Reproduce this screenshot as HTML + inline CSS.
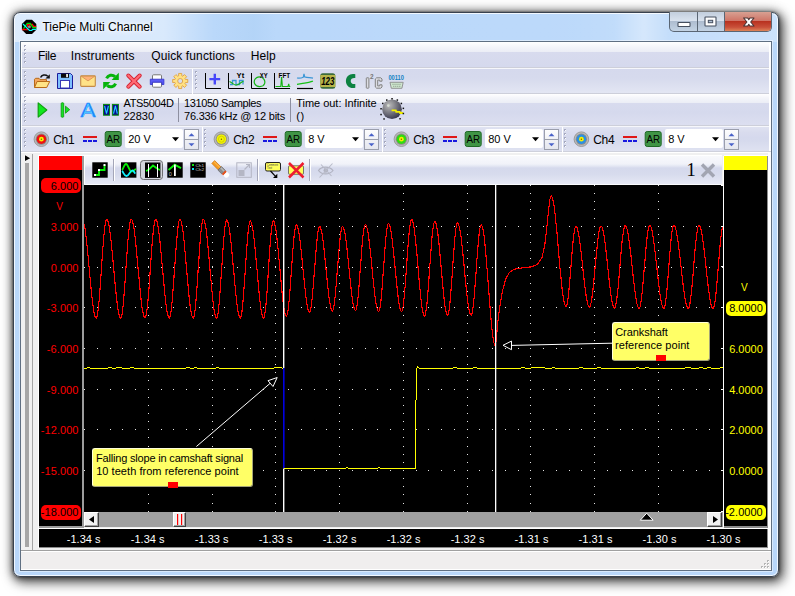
<!DOCTYPE html>
<html><head><meta charset="utf-8"><title>TiePie Multi Channel</title>
<style>
html,body{margin:0;padding:0;}
body{width:795px;height:596px;background:#fff;position:relative;overflow:hidden;font-family:"Liberation Sans",sans-serif;}
.a{position:absolute;}
.t{position:absolute;white-space:nowrap;line-height:1;opacity:.999;font-family:"Liberation Sans",sans-serif;}
#win{left:13px;top:12px;width:766px;height:565px;border-radius:7px;box-sizing:border-box;border:1px solid #39424f;
 background:linear-gradient(90deg,rgba(255,255,255,.5) 0,rgba(255,255,255,.45) 150px,rgba(255,255,255,0) 200px,rgba(160,200,240,.25) 240px,rgba(255,255,255,0) 262px,rgba(255,255,255,.04) 560px,rgba(255,255,255,.1) 600px,rgba(255,255,255,.4) 630px,rgba(255,255,255,.15) 655px,rgba(255,255,255,.25) 100%) 0 0/100% 29px no-repeat, linear-gradient(#bad8fa 0,#b9d7fa 100%);
 box-shadow:0 0 0 1px rgba(255,255,255,.8) inset, 0 0 2px rgba(0,0,0,.55), 0 1px 6px rgba(0,0,0,.5), 0 0 13px rgba(0,0,0,.3), 3px 4px 12px 2px rgba(0,0,0,.55);}
svg{position:absolute;left:0;top:0;overflow:visible}
</style></head><body>
<div class="a" id="win"></div><div class="a" style="left:669px;top:12px;width:103px;height:20px;border:1px solid #5a6674;border-top:none;border-radius:0 0 5px 5px;box-sizing:border-box;overflow:hidden;background:linear-gradient(#c2cedd 0,#d9e2ee 45%,#aebdd0 50%,#c3d3e4 100%)">
<div class="a" style="left:54px;top:0;width:48px;height:19px;background:linear-gradient(#d8a092 0,#cf7668 45%,#b93220 50%,#c9503a 80%,#dd8458 100%);border-left:1px solid #5a6674"></div>
<div class="a" style="left:27px;top:0;width:1px;height:19px;background:#5a6674"></div>
</div><svg width="795" height="596" viewBox="0 0 795 596">
<rect x="678" y="22.500" width="12" height="4" rx="0.500" fill="#fff" stroke="#454f5e" stroke-width="1.100"/>
<rect x="705" y="17" width="11" height="9" rx="0.500" fill="#fff" stroke="#454f5e" stroke-width="1.100"/>
<rect x="708.300" y="20.300" width="4.400" height="2.400" fill="#aebfd3" stroke="#454f5e" stroke-width="1"/>
<path d="M743.600 18h4.100l1.100 1.600 1.100-1.600h4.100l-3.300 4 3.300 4h-4.100l-1.100-1.600-1.100 1.600h-4.100l3.300-4z" fill="#fff" stroke="#4a3434" stroke-width="1.100" stroke-linejoin="round"/>
</svg><span class="t" style="left:42.40px;top:20.74px;font-size:12px;color:#000;letter-spacing:0.001px;text-shadow:0 0 6px #fff,0 0 10px #fff,0 0 3px #fff;">TiePie Multi Channel</span><svg width="795" height="596" viewBox="0 0 795 596">
<path d="M26.200 19.700h5.800l4.300 4.300v5.800l-4.300 4.300h-5.800l-4.300-4.300v-5.800z" fill="#000"/>
<path d="M22 29.500h6M27.500 27v-2.500h5l1 1.800h2.700" stroke="#f00" stroke-width="1.300" fill="none"/>
<path d="M23.500 28.600l3.700-5.200h3l2.800 4.200h3.200" stroke="#0d0" stroke-width="1.200" fill="none"/>
<path d="M23 24l6.500 6.500h2.200l1-1.200h3.500" stroke="#0ff" stroke-width="1.200" fill="none"/>
<circle cx="29.400" cy="26.700" r="1.500" fill="#8a8a8a"/>
</svg><div class="a" style="left:20px;top:41px;width:752px;height:530px;box-sizing:border-box;border:1px solid #5f6f82;background:#f0f0f0;box-shadow:0 0 0 1px rgba(255,255,255,.45)"></div><div class="a" style="left:21px;top:42px;width:750px;height:111px;background:#fff"></div><div class="a" style="left:22px;top:42px;width:747px;height:25px;background:linear-gradient(#ffffff 0,#f4f5fa 5px,#eceef6 9.5px,#d8dbee 10px,#d5d9ed 100%)"></div><div class="a" style="left:22px;top:68px;width:747px;height:25px;background:linear-gradient(#d5d9ed 0,#d6daed 40%,#e3e6f3 100%)"></div><div class="a" style="left:22px;top:94px;width:747px;height:31px;background:linear-gradient(#ffffff 0,#f4f5fa 4px,#eceef6 8.5px,#d8dbee 9px,#d5d9ed 60%,#dcdff0 100%)"></div><div class="a" style="left:22px;top:126px;width:747px;height:25px;background:linear-gradient(#e1e4f2 0,#d9dcee 6px,#d5d9ed 12px,#d6daed 60%,#dfe2f1 100%)"></div><div class="a" style="left:21px;top:151px;width:750px;height:1px;background:#cfd1dc"></div><div class="a" style="left:22px;top:67px;width:747px;height:1px;background:#cdcfda"></div><div class="a" style="left:22px;top:93px;width:747px;height:1px;background:#cdcfda"></div><div class="a" style="left:22px;top:125px;width:747px;height:1px;background:#cdcfda"></div><div class="a" style="left:22px;top:68px;width:747px;height:1px;background:#f6f7fb"></div><div class="a" style="left:22px;top:126px;width:747px;height:1px;background:#f6f7fb"></div><svg width="795" height="596" viewBox="0 0 795 596"><rect x="24" y="45" width="2" height="2" fill="#fff"/><rect x="24" y="45" width="2" height="1" fill="#a5a9bf"/><rect x="24" y="46" width="1" height="1" fill="#a5a9bf"/><rect x="24" y="49" width="2" height="2" fill="#fff"/><rect x="24" y="49" width="2" height="1" fill="#a5a9bf"/><rect x="24" y="50" width="1" height="1" fill="#a5a9bf"/><rect x="24" y="53" width="2" height="2" fill="#fff"/><rect x="24" y="53" width="2" height="1" fill="#a5a9bf"/><rect x="24" y="54" width="1" height="1" fill="#a5a9bf"/><rect x="24" y="57" width="2" height="2" fill="#fff"/><rect x="24" y="57" width="2" height="1" fill="#a5a9bf"/><rect x="24" y="58" width="1" height="1" fill="#a5a9bf"/><rect x="24" y="61" width="2" height="2" fill="#fff"/><rect x="24" y="61" width="2" height="1" fill="#a5a9bf"/><rect x="24" y="62" width="1" height="1" fill="#a5a9bf"/><rect x="24" y="71" width="2" height="2" fill="#fff"/><rect x="24" y="71" width="2" height="1" fill="#a5a9bf"/><rect x="24" y="72" width="1" height="1" fill="#a5a9bf"/><rect x="24" y="75" width="2" height="2" fill="#fff"/><rect x="24" y="75" width="2" height="1" fill="#a5a9bf"/><rect x="24" y="76" width="1" height="1" fill="#a5a9bf"/><rect x="24" y="79" width="2" height="2" fill="#fff"/><rect x="24" y="79" width="2" height="1" fill="#a5a9bf"/><rect x="24" y="80" width="1" height="1" fill="#a5a9bf"/><rect x="24" y="83" width="2" height="2" fill="#fff"/><rect x="24" y="83" width="2" height="1" fill="#a5a9bf"/><rect x="24" y="84" width="1" height="1" fill="#a5a9bf"/><rect x="24" y="87" width="2" height="2" fill="#fff"/><rect x="24" y="87" width="2" height="1" fill="#a5a9bf"/><rect x="24" y="88" width="1" height="1" fill="#a5a9bf"/><rect x="24" y="96" width="2" height="2" fill="#fff"/><rect x="24" y="96" width="2" height="1" fill="#a5a9bf"/><rect x="24" y="97" width="1" height="1" fill="#a5a9bf"/><rect x="24" y="100" width="2" height="2" fill="#fff"/><rect x="24" y="100" width="2" height="1" fill="#a5a9bf"/><rect x="24" y="101" width="1" height="1" fill="#a5a9bf"/><rect x="24" y="104" width="2" height="2" fill="#fff"/><rect x="24" y="104" width="2" height="1" fill="#a5a9bf"/><rect x="24" y="105" width="1" height="1" fill="#a5a9bf"/><rect x="24" y="108" width="2" height="2" fill="#fff"/><rect x="24" y="108" width="2" height="1" fill="#a5a9bf"/><rect x="24" y="109" width="1" height="1" fill="#a5a9bf"/><rect x="24" y="112" width="2" height="2" fill="#fff"/><rect x="24" y="112" width="2" height="1" fill="#a5a9bf"/><rect x="24" y="113" width="1" height="1" fill="#a5a9bf"/><rect x="24" y="116" width="2" height="2" fill="#fff"/><rect x="24" y="116" width="2" height="1" fill="#a5a9bf"/><rect x="24" y="117" width="1" height="1" fill="#a5a9bf"/><rect x="24" y="120" width="2" height="2" fill="#fff"/><rect x="24" y="120" width="2" height="1" fill="#a5a9bf"/><rect x="24" y="121" width="1" height="1" fill="#a5a9bf"/><rect x="24" y="129" width="2" height="2" fill="#fff"/><rect x="24" y="129" width="2" height="1" fill="#a5a9bf"/><rect x="24" y="130" width="1" height="1" fill="#a5a9bf"/><rect x="24" y="133" width="2" height="2" fill="#fff"/><rect x="24" y="133" width="2" height="1" fill="#a5a9bf"/><rect x="24" y="134" width="1" height="1" fill="#a5a9bf"/><rect x="24" y="137" width="2" height="2" fill="#fff"/><rect x="24" y="137" width="2" height="1" fill="#a5a9bf"/><rect x="24" y="138" width="1" height="1" fill="#a5a9bf"/><rect x="24" y="141" width="2" height="2" fill="#fff"/><rect x="24" y="141" width="2" height="1" fill="#a5a9bf"/><rect x="24" y="142" width="1" height="1" fill="#a5a9bf"/><rect x="24" y="145" width="2" height="2" fill="#fff"/><rect x="24" y="145" width="2" height="1" fill="#a5a9bf"/><rect x="24" y="146" width="1" height="1" fill="#a5a9bf"/><rect x="195" y="71" width="2" height="2" fill="#fff"/><rect x="195" y="71" width="2" height="1" fill="#a5a9bf"/><rect x="195" y="72" width="1" height="1" fill="#a5a9bf"/><rect x="195" y="75" width="2" height="2" fill="#fff"/><rect x="195" y="75" width="2" height="1" fill="#a5a9bf"/><rect x="195" y="76" width="1" height="1" fill="#a5a9bf"/><rect x="195" y="79" width="2" height="2" fill="#fff"/><rect x="195" y="79" width="2" height="1" fill="#a5a9bf"/><rect x="195" y="80" width="1" height="1" fill="#a5a9bf"/><rect x="195" y="83" width="2" height="2" fill="#fff"/><rect x="195" y="83" width="2" height="1" fill="#a5a9bf"/><rect x="195" y="84" width="1" height="1" fill="#a5a9bf"/><rect x="195" y="87" width="2" height="2" fill="#fff"/><rect x="195" y="87" width="2" height="1" fill="#a5a9bf"/><rect x="195" y="88" width="1" height="1" fill="#a5a9bf"/><rect x="204" y="129" width="2" height="2" fill="#fff"/><rect x="204" y="129" width="2" height="1" fill="#a5a9bf"/><rect x="204" y="130" width="1" height="1" fill="#a5a9bf"/><rect x="204" y="133" width="2" height="2" fill="#fff"/><rect x="204" y="133" width="2" height="1" fill="#a5a9bf"/><rect x="204" y="134" width="1" height="1" fill="#a5a9bf"/><rect x="204" y="137" width="2" height="2" fill="#fff"/><rect x="204" y="137" width="2" height="1" fill="#a5a9bf"/><rect x="204" y="138" width="1" height="1" fill="#a5a9bf"/><rect x="204" y="141" width="2" height="2" fill="#fff"/><rect x="204" y="141" width="2" height="1" fill="#a5a9bf"/><rect x="204" y="142" width="1" height="1" fill="#a5a9bf"/><rect x="204" y="145" width="2" height="2" fill="#fff"/><rect x="204" y="145" width="2" height="1" fill="#a5a9bf"/><rect x="204" y="146" width="1" height="1" fill="#a5a9bf"/><rect x="384" y="129" width="2" height="2" fill="#fff"/><rect x="384" y="129" width="2" height="1" fill="#a5a9bf"/><rect x="384" y="130" width="1" height="1" fill="#a5a9bf"/><rect x="384" y="133" width="2" height="2" fill="#fff"/><rect x="384" y="133" width="2" height="1" fill="#a5a9bf"/><rect x="384" y="134" width="1" height="1" fill="#a5a9bf"/><rect x="384" y="137" width="2" height="2" fill="#fff"/><rect x="384" y="137" width="2" height="1" fill="#a5a9bf"/><rect x="384" y="138" width="1" height="1" fill="#a5a9bf"/><rect x="384" y="141" width="2" height="2" fill="#fff"/><rect x="384" y="141" width="2" height="1" fill="#a5a9bf"/><rect x="384" y="142" width="1" height="1" fill="#a5a9bf"/><rect x="384" y="145" width="2" height="2" fill="#fff"/><rect x="384" y="145" width="2" height="1" fill="#a5a9bf"/><rect x="384" y="146" width="1" height="1" fill="#a5a9bf"/><rect x="564" y="129" width="2" height="2" fill="#fff"/><rect x="564" y="129" width="2" height="1" fill="#a5a9bf"/><rect x="564" y="130" width="1" height="1" fill="#a5a9bf"/><rect x="564" y="133" width="2" height="2" fill="#fff"/><rect x="564" y="133" width="2" height="1" fill="#a5a9bf"/><rect x="564" y="134" width="1" height="1" fill="#a5a9bf"/><rect x="564" y="137" width="2" height="2" fill="#fff"/><rect x="564" y="137" width="2" height="1" fill="#a5a9bf"/><rect x="564" y="138" width="1" height="1" fill="#a5a9bf"/><rect x="564" y="141" width="2" height="2" fill="#fff"/><rect x="564" y="141" width="2" height="1" fill="#a5a9bf"/><rect x="564" y="142" width="1" height="1" fill="#a5a9bf"/><rect x="564" y="145" width="2" height="2" fill="#fff"/><rect x="564" y="145" width="2" height="1" fill="#a5a9bf"/><rect x="564" y="146" width="1" height="1" fill="#a5a9bf"/></svg><div class="a" style="left:192px;top:69px;width:1px;height:25px;background:#fff"></div><div class="a" style="left:202px;top:127px;width:1px;height:25px;background:#fff"></div><div class="a" style="left:382px;top:127px;width:1px;height:25px;background:#fff"></div><div class="a" style="left:562px;top:127px;width:1px;height:25px;background:#fff"></div><span class="t" style="left:38.00px;top:49.54px;font-size:12px;color:#000;letter-spacing:-0.334px;">File</span><span class="t" style="left:70.80px;top:49.54px;font-size:12px;color:#000;letter-spacing:0.101px;">Instruments</span><span class="t" style="left:151.20px;top:49.54px;font-size:12px;color:#000;letter-spacing:0.111px;">Quick functions</span><span class="t" style="left:250.80px;top:49.54px;font-size:12px;color:#000;letter-spacing:0.030px;">Help</span><span class="t" style="left:123.50px;top:97.69px;font-size:11px;color:#000;letter-spacing:-0.374px;">ATS5004D</span><span class="t" style="left:123.50px;top:110.69px;font-size:11px;color:#000;">22830</span><div class="a" style="left:178px;top:98px;width:1px;height:24px;background:#8d8fa0"></div><span class="t" style="left:184.00px;top:97.69px;font-size:11px;color:#000;letter-spacing:-0.397px;">131050 Samples</span><span class="t" style="left:184.00px;top:110.69px;font-size:11px;color:#000;letter-spacing:-0.217px;">76.336 kHz @ 12 bits</span><div class="a" style="left:290px;top:98px;width:1px;height:24px;background:#8d8fa0"></div><span class="t" style="left:296.20px;top:97.69px;font-size:11px;color:#000;letter-spacing:-0.022px;">Time out: Infinite</span><span class="t" style="left:296.20px;top:110.69px;font-size:11px;color:#000;letter-spacing:0.6px;">()</span><span class="t" style="left:53.30px;top:133.74px;font-size:12px;color:#000;letter-spacing:-0.338px;">Ch1</span><div class="a" style="left:125px;top:129px;width:58px;height:19px;background:#fff;border-radius:2px"></div><span class="t" style="left:128.20px;top:134.09px;font-size:11px;color:#000;">20 V</span><div class="a" style="left:184px;top:129px;width:15px;height:21px;box-sizing:border-box;border:1px solid #9a9eac;background:linear-gradient(#fdfdfe,#e4e6ee)"></div><div class="a" style="left:185px;top:139px;width:13px;height:1px;background:#9a9eac"></div><span class="t" style="left:233.30px;top:133.74px;font-size:12px;color:#000;letter-spacing:-0.338px;">Ch2</span><div class="a" style="left:305px;top:129px;width:58px;height:19px;background:#fff;border-radius:2px"></div><span class="t" style="left:308.20px;top:134.09px;font-size:11px;color:#000;">8 V</span><div class="a" style="left:364px;top:129px;width:15px;height:21px;box-sizing:border-box;border:1px solid #9a9eac;background:linear-gradient(#fdfdfe,#e4e6ee)"></div><div class="a" style="left:365px;top:139px;width:13px;height:1px;background:#9a9eac"></div><span class="t" style="left:413.30px;top:133.74px;font-size:12px;color:#000;letter-spacing:-0.338px;">Ch3</span><div class="a" style="left:485px;top:129px;width:58px;height:19px;background:#fff;border-radius:2px"></div><span class="t" style="left:488.20px;top:134.09px;font-size:11px;color:#000;">80 V</span><div class="a" style="left:544px;top:129px;width:15px;height:21px;box-sizing:border-box;border:1px solid #9a9eac;background:linear-gradient(#fdfdfe,#e4e6ee)"></div><div class="a" style="left:545px;top:139px;width:13px;height:1px;background:#9a9eac"></div><span class="t" style="left:593.30px;top:133.74px;font-size:12px;color:#000;letter-spacing:-0.338px;">Ch4</span><div class="a" style="left:665px;top:129px;width:58px;height:19px;background:#fff;border-radius:2px"></div><span class="t" style="left:668.20px;top:134.09px;font-size:11px;color:#000;">8 V</span><div class="a" style="left:724px;top:129px;width:15px;height:21px;box-sizing:border-box;border:1px solid #9a9eac;background:linear-gradient(#fdfdfe,#e4e6ee)"></div><div class="a" style="left:725px;top:139px;width:13px;height:1px;background:#9a9eac"></div><div class="a" style="left:768px;top:153px;width:3px;height:397px;background:#fff"></div><div class="a" style="left:32px;top:154px;width:1px;height:396px;background:#a4a4a4"></div><div class="a" style="left:25px;top:163px;width:4px;height:384px;background:#a6a6a6"></div><svg width="795" height="596" viewBox="0 0 795 596"><path d="M25 155.300l5.200 2.900-5.200 2.900z" fill="#000" stroke="#fff" stroke-width="0.800" paint-order="stroke"/></svg><div class="a" style="left:38px;top:155px;width:46px;height:373px;background:#9c9c9c;border-left:1px solid #fff;border-top:1px solid #fff;box-sizing:border-box"></div><div class="a" style="left:39px;top:156px;width:43px;height:370px;background:#000"></div><div class="a" style="left:39px;top:156px;width:43px;height:14px;background:#f00"></div><div class="a" style="left:724px;top:155px;width:44px;height:373px;background:#8c8c8c;border-top:1px solid #fff;box-sizing:border-box"></div><div class="a" style="left:724px;top:156px;width:43px;height:370px;background:#000"></div><div class="a" style="left:724px;top:156px;width:43px;height:14px;background:#ff0"></div><div class="a" style="left:38px;top:528px;width:730px;height:20px;background:#8c8c8c;border-left:1px solid #fff;border-top:1px solid #fff;box-sizing:border-box"></div><div class="a" style="left:39px;top:529px;width:728px;height:18px;background:#000"></div><div class="a" style="left:84px;top:155px;width:638px;height:30px;box-sizing:border-box;border-top:1px solid #fff;border-left:1px solid #fff;border-bottom:1px solid #fafbfd;background:linear-gradient(#f8f9fc 0,#f1f2f9 8px,#e4e7f3 10px,#d5d9ec 12px,#d7dbed 18px,#e6e8f4 100%)"></div><div class="a" style="left:84px;top:185px;width:639px;height:327px;background:#000"></div><div class="a" style="left:723px;top:156px;width:1px;height:371px;background:#fff"></div><div class="a" style="left:84px;top:512px;width:639px;height:15px;background:#a0a0a0"></div><div class="a" style="left:84px;top:512px;width:15px;height:15px;box-sizing:border-box;background:#f0f0f0;border:1px solid #fff;border-right-color:#404040;border-bottom-color:#404040;box-shadow:-1px -1px 0 #a0a0a0 inset"></div><div class="a" style="left:707px;top:512px;width:15px;height:15px;box-sizing:border-box;background:#f0f0f0;border:1px solid #fff;border-right-color:#404040;border-bottom-color:#404040;box-shadow:-1px -1px 0 #a0a0a0 inset"></div><div class="a" style="left:173px;top:512px;width:13px;height:15px;box-sizing:border-box;background:#f0f0f0;border:1px solid #fff;border-right-color:#404040;border-bottom-color:#404040;box-shadow:-1px -1px 0 #a0a0a0 inset"></div><svg width="795" height="596" viewBox="0 0 795 596">
<path d="M94 516v7l-5-3.5z" fill="#000"/><path d="M713 516v7l5-3.5z" fill="#000"/>
<rect x="177" y="514" width="1.2" height="11" fill="#f00"/><rect x="181" y="514" width="1.2" height="11" fill="#f00"/>
<path d="M646.7 513.2l6.4 7h-12.8z" fill="#000" stroke="#fff" stroke-width="1"/>
</svg><svg width="795" height="596" viewBox="0 0 795 596" shape-rendering="auto"><path d="M84 226h1v1h-1zM84 267h1v1h-1zM84 307h1v1h-1zM84 348h1v1h-1zM84 389h1v1h-1zM84 429h1v1h-1zM84 470h1v1h-1zM97 226h1v1h-1zM97 267h1v1h-1zM97 307h1v1h-1zM97 348h1v1h-1zM97 389h1v1h-1zM97 429h1v1h-1zM97 470h1v1h-1zM110 226h1v1h-1zM110 267h1v1h-1zM110 307h1v1h-1zM110 348h1v1h-1zM110 389h1v1h-1zM110 429h1v1h-1zM110 470h1v1h-1zM122 226h1v1h-1zM122 267h1v1h-1zM122 307h1v1h-1zM122 348h1v1h-1zM122 389h1v1h-1zM122 429h1v1h-1zM122 470h1v1h-1zM135 226h1v1h-1zM135 267h1v1h-1zM135 307h1v1h-1zM135 348h1v1h-1zM135 389h1v1h-1zM135 429h1v1h-1zM135 470h1v1h-1zM148 185h1v1h-1zM148 193h1v1h-1zM148 201h1v1h-1zM148 209h1v1h-1zM148 218h1v1h-1zM148 226h1v1h-1zM148 234h1v1h-1zM148 242h1v1h-1zM148 250h1v1h-1zM148 258h1v1h-1zM148 266h1v1h-1zM148 267h1v1h-1zM148 275h1v1h-1zM148 283h1v1h-1zM148 291h1v1h-1zM148 299h1v1h-1zM148 307h1v1h-1zM148 315h1v1h-1zM148 323h1v1h-1zM148 332h1v1h-1zM148 340h1v1h-1zM148 348h1v1h-1zM148 356h1v1h-1zM148 364h1v1h-1zM148 372h1v1h-1zM148 380h1v1h-1zM148 389h1v1h-1zM148 397h1v1h-1zM148 405h1v1h-1zM148 413h1v1h-1zM148 421h1v1h-1zM148 429h1v1h-1zM148 437h1v1h-1zM148 446h1v1h-1zM148 454h1v1h-1zM148 462h1v1h-1zM148 470h1v1h-1zM148 478h1v1h-1zM148 486h1v1h-1zM148 494h1v1h-1zM148 503h1v1h-1zM148 511h1v1h-1zM161 226h1v1h-1zM161 267h1v1h-1zM161 307h1v1h-1zM161 348h1v1h-1zM161 389h1v1h-1zM161 429h1v1h-1zM161 470h1v1h-1zM173 226h1v1h-1zM173 267h1v1h-1zM173 307h1v1h-1zM173 348h1v1h-1zM173 389h1v1h-1zM173 429h1v1h-1zM173 470h1v1h-1zM186 226h1v1h-1zM186 267h1v1h-1zM186 307h1v1h-1zM186 348h1v1h-1zM186 389h1v1h-1zM186 429h1v1h-1zM186 470h1v1h-1zM199 226h1v1h-1zM199 267h1v1h-1zM199 307h1v1h-1zM199 348h1v1h-1zM199 389h1v1h-1zM199 429h1v1h-1zM199 470h1v1h-1zM212 185h1v1h-1zM212 193h1v1h-1zM212 201h1v1h-1zM212 209h1v1h-1zM212 218h1v1h-1zM212 226h1v1h-1zM212 234h1v1h-1zM212 242h1v1h-1zM212 250h1v1h-1zM212 258h1v1h-1zM212 266h1v1h-1zM212 267h1v1h-1zM212 275h1v1h-1zM212 283h1v1h-1zM212 291h1v1h-1zM212 299h1v1h-1zM212 307h1v1h-1zM212 315h1v1h-1zM212 323h1v1h-1zM212 332h1v1h-1zM212 340h1v1h-1zM212 348h1v1h-1zM212 356h1v1h-1zM212 364h1v1h-1zM212 372h1v1h-1zM212 380h1v1h-1zM212 389h1v1h-1zM212 397h1v1h-1zM212 405h1v1h-1zM212 413h1v1h-1zM212 421h1v1h-1zM212 429h1v1h-1zM212 437h1v1h-1zM212 446h1v1h-1zM212 454h1v1h-1zM212 462h1v1h-1zM212 470h1v1h-1zM212 478h1v1h-1zM212 486h1v1h-1zM212 494h1v1h-1zM212 503h1v1h-1zM212 511h1v1h-1zM224 226h1v1h-1zM224 267h1v1h-1zM224 307h1v1h-1zM224 348h1v1h-1zM224 389h1v1h-1zM224 429h1v1h-1zM224 470h1v1h-1zM237 226h1v1h-1zM237 267h1v1h-1zM237 307h1v1h-1zM237 348h1v1h-1zM237 389h1v1h-1zM237 429h1v1h-1zM237 470h1v1h-1zM250 226h1v1h-1zM250 267h1v1h-1zM250 307h1v1h-1zM250 348h1v1h-1zM250 389h1v1h-1zM250 429h1v1h-1zM250 470h1v1h-1zM263 226h1v1h-1zM263 267h1v1h-1zM263 307h1v1h-1zM263 348h1v1h-1zM263 389h1v1h-1zM263 429h1v1h-1zM263 470h1v1h-1zM275 185h1v1h-1zM275 193h1v1h-1zM275 201h1v1h-1zM275 209h1v1h-1zM275 218h1v1h-1zM275 226h1v1h-1zM275 234h1v1h-1zM275 242h1v1h-1zM275 250h1v1h-1zM275 258h1v1h-1zM275 266h1v1h-1zM275 267h1v1h-1zM275 275h1v1h-1zM275 283h1v1h-1zM275 291h1v1h-1zM275 299h1v1h-1zM275 307h1v1h-1zM275 315h1v1h-1zM275 323h1v1h-1zM275 332h1v1h-1zM275 340h1v1h-1zM275 348h1v1h-1zM275 356h1v1h-1zM275 364h1v1h-1zM275 372h1v1h-1zM275 380h1v1h-1zM275 389h1v1h-1zM275 397h1v1h-1zM275 405h1v1h-1zM275 413h1v1h-1zM275 421h1v1h-1zM275 429h1v1h-1zM275 437h1v1h-1zM275 446h1v1h-1zM275 454h1v1h-1zM275 462h1v1h-1zM275 470h1v1h-1zM275 478h1v1h-1zM275 486h1v1h-1zM275 494h1v1h-1zM275 503h1v1h-1zM275 511h1v1h-1zM288 226h1v1h-1zM288 267h1v1h-1zM288 307h1v1h-1zM288 348h1v1h-1zM288 389h1v1h-1zM288 429h1v1h-1zM288 470h1v1h-1zM301 226h1v1h-1zM301 267h1v1h-1zM301 307h1v1h-1zM301 348h1v1h-1zM301 389h1v1h-1zM301 429h1v1h-1zM301 470h1v1h-1zM314 226h1v1h-1zM314 267h1v1h-1zM314 307h1v1h-1zM314 348h1v1h-1zM314 389h1v1h-1zM314 429h1v1h-1zM314 470h1v1h-1zM326 226h1v1h-1zM326 267h1v1h-1zM326 307h1v1h-1zM326 348h1v1h-1zM326 389h1v1h-1zM326 429h1v1h-1zM326 470h1v1h-1zM339 185h1v1h-1zM339 193h1v1h-1zM339 201h1v1h-1zM339 209h1v1h-1zM339 218h1v1h-1zM339 226h1v1h-1zM339 234h1v1h-1zM339 242h1v1h-1zM339 250h1v1h-1zM339 258h1v1h-1zM339 266h1v1h-1zM339 267h1v1h-1zM339 275h1v1h-1zM339 283h1v1h-1zM339 291h1v1h-1zM339 299h1v1h-1zM339 307h1v1h-1zM339 315h1v1h-1zM339 323h1v1h-1zM339 332h1v1h-1zM339 340h1v1h-1zM339 348h1v1h-1zM339 356h1v1h-1zM339 364h1v1h-1zM339 372h1v1h-1zM339 380h1v1h-1zM339 389h1v1h-1zM339 397h1v1h-1zM339 405h1v1h-1zM339 413h1v1h-1zM339 421h1v1h-1zM339 429h1v1h-1zM339 437h1v1h-1zM339 446h1v1h-1zM339 454h1v1h-1zM339 462h1v1h-1zM339 470h1v1h-1zM339 478h1v1h-1zM339 486h1v1h-1zM339 494h1v1h-1zM339 503h1v1h-1zM339 511h1v1h-1zM352 226h1v1h-1zM352 267h1v1h-1zM352 307h1v1h-1zM352 348h1v1h-1zM352 389h1v1h-1zM352 429h1v1h-1zM352 470h1v1h-1zM365 226h1v1h-1zM365 267h1v1h-1zM365 307h1v1h-1zM365 348h1v1h-1zM365 389h1v1h-1zM365 429h1v1h-1zM365 470h1v1h-1zM377 226h1v1h-1zM377 267h1v1h-1zM377 307h1v1h-1zM377 348h1v1h-1zM377 389h1v1h-1zM377 429h1v1h-1zM377 470h1v1h-1zM390 226h1v1h-1zM390 267h1v1h-1zM390 307h1v1h-1zM390 348h1v1h-1zM390 389h1v1h-1zM390 429h1v1h-1zM390 470h1v1h-1zM403 185h1v1h-1zM403 193h1v1h-1zM403 201h1v1h-1zM403 209h1v1h-1zM403 218h1v1h-1zM403 226h1v1h-1zM403 234h1v1h-1zM403 242h1v1h-1zM403 250h1v1h-1zM403 258h1v1h-1zM403 266h1v1h-1zM403 267h1v1h-1zM403 275h1v1h-1zM403 283h1v1h-1zM403 291h1v1h-1zM403 299h1v1h-1zM403 307h1v1h-1zM403 315h1v1h-1zM403 323h1v1h-1zM403 332h1v1h-1zM403 340h1v1h-1zM403 348h1v1h-1zM403 356h1v1h-1zM403 364h1v1h-1zM403 372h1v1h-1zM403 380h1v1h-1zM403 389h1v1h-1zM403 397h1v1h-1zM403 405h1v1h-1zM403 413h1v1h-1zM403 421h1v1h-1zM403 429h1v1h-1zM403 437h1v1h-1zM403 446h1v1h-1zM403 454h1v1h-1zM403 462h1v1h-1zM403 470h1v1h-1zM403 478h1v1h-1zM403 486h1v1h-1zM403 494h1v1h-1zM403 503h1v1h-1zM403 511h1v1h-1zM416 226h1v1h-1zM416 267h1v1h-1zM416 307h1v1h-1zM416 348h1v1h-1zM416 389h1v1h-1zM416 429h1v1h-1zM416 470h1v1h-1zM428 226h1v1h-1zM428 267h1v1h-1zM428 307h1v1h-1zM428 348h1v1h-1zM428 389h1v1h-1zM428 429h1v1h-1zM428 470h1v1h-1zM441 226h1v1h-1zM441 267h1v1h-1zM441 307h1v1h-1zM441 348h1v1h-1zM441 389h1v1h-1zM441 429h1v1h-1zM441 470h1v1h-1zM454 226h1v1h-1zM454 267h1v1h-1zM454 307h1v1h-1zM454 348h1v1h-1zM454 389h1v1h-1zM454 429h1v1h-1zM454 470h1v1h-1zM467 185h1v1h-1zM467 193h1v1h-1zM467 201h1v1h-1zM467 209h1v1h-1zM467 218h1v1h-1zM467 226h1v1h-1zM467 234h1v1h-1zM467 242h1v1h-1zM467 250h1v1h-1zM467 258h1v1h-1zM467 266h1v1h-1zM467 267h1v1h-1zM467 275h1v1h-1zM467 283h1v1h-1zM467 291h1v1h-1zM467 299h1v1h-1zM467 307h1v1h-1zM467 315h1v1h-1zM467 323h1v1h-1zM467 332h1v1h-1zM467 340h1v1h-1zM467 348h1v1h-1zM467 356h1v1h-1zM467 364h1v1h-1zM467 372h1v1h-1zM467 380h1v1h-1zM467 389h1v1h-1zM467 397h1v1h-1zM467 405h1v1h-1zM467 413h1v1h-1zM467 421h1v1h-1zM467 429h1v1h-1zM467 437h1v1h-1zM467 446h1v1h-1zM467 454h1v1h-1zM467 462h1v1h-1zM467 470h1v1h-1zM467 478h1v1h-1zM467 486h1v1h-1zM467 494h1v1h-1zM467 503h1v1h-1zM467 511h1v1h-1zM479 226h1v1h-1zM479 267h1v1h-1zM479 307h1v1h-1zM479 348h1v1h-1zM479 389h1v1h-1zM479 429h1v1h-1zM479 470h1v1h-1zM492 226h1v1h-1zM492 267h1v1h-1zM492 307h1v1h-1zM492 348h1v1h-1zM492 389h1v1h-1zM492 429h1v1h-1zM492 470h1v1h-1zM505 226h1v1h-1zM505 267h1v1h-1zM505 307h1v1h-1zM505 348h1v1h-1zM505 389h1v1h-1zM505 429h1v1h-1zM505 470h1v1h-1zM518 226h1v1h-1zM518 267h1v1h-1zM518 307h1v1h-1zM518 348h1v1h-1zM518 389h1v1h-1zM518 429h1v1h-1zM518 470h1v1h-1zM530 185h1v1h-1zM530 193h1v1h-1zM530 201h1v1h-1zM530 209h1v1h-1zM530 218h1v1h-1zM530 226h1v1h-1zM530 234h1v1h-1zM530 242h1v1h-1zM530 250h1v1h-1zM530 258h1v1h-1zM530 266h1v1h-1zM530 267h1v1h-1zM530 275h1v1h-1zM530 283h1v1h-1zM530 291h1v1h-1zM530 299h1v1h-1zM530 307h1v1h-1zM530 315h1v1h-1zM530 323h1v1h-1zM530 332h1v1h-1zM530 340h1v1h-1zM530 348h1v1h-1zM530 356h1v1h-1zM530 364h1v1h-1zM530 372h1v1h-1zM530 380h1v1h-1zM530 389h1v1h-1zM530 397h1v1h-1zM530 405h1v1h-1zM530 413h1v1h-1zM530 421h1v1h-1zM530 429h1v1h-1zM530 437h1v1h-1zM530 446h1v1h-1zM530 454h1v1h-1zM530 462h1v1h-1zM530 470h1v1h-1zM530 478h1v1h-1zM530 486h1v1h-1zM530 494h1v1h-1zM530 503h1v1h-1zM530 511h1v1h-1zM543 226h1v1h-1zM543 267h1v1h-1zM543 307h1v1h-1zM543 348h1v1h-1zM543 389h1v1h-1zM543 429h1v1h-1zM543 470h1v1h-1zM556 226h1v1h-1zM556 267h1v1h-1zM556 307h1v1h-1zM556 348h1v1h-1zM556 389h1v1h-1zM556 429h1v1h-1zM556 470h1v1h-1zM569 226h1v1h-1zM569 267h1v1h-1zM569 307h1v1h-1zM569 348h1v1h-1zM569 389h1v1h-1zM569 429h1v1h-1zM569 470h1v1h-1zM581 226h1v1h-1zM581 267h1v1h-1zM581 307h1v1h-1zM581 348h1v1h-1zM581 389h1v1h-1zM581 429h1v1h-1zM581 470h1v1h-1zM594 185h1v1h-1zM594 193h1v1h-1zM594 201h1v1h-1zM594 209h1v1h-1zM594 218h1v1h-1zM594 226h1v1h-1zM594 234h1v1h-1zM594 242h1v1h-1zM594 250h1v1h-1zM594 258h1v1h-1zM594 266h1v1h-1zM594 267h1v1h-1zM594 275h1v1h-1zM594 283h1v1h-1zM594 291h1v1h-1zM594 299h1v1h-1zM594 307h1v1h-1zM594 315h1v1h-1zM594 323h1v1h-1zM594 332h1v1h-1zM594 340h1v1h-1zM594 348h1v1h-1zM594 356h1v1h-1zM594 364h1v1h-1zM594 372h1v1h-1zM594 380h1v1h-1zM594 389h1v1h-1zM594 397h1v1h-1zM594 405h1v1h-1zM594 413h1v1h-1zM594 421h1v1h-1zM594 429h1v1h-1zM594 437h1v1h-1zM594 446h1v1h-1zM594 454h1v1h-1zM594 462h1v1h-1zM594 470h1v1h-1zM594 478h1v1h-1zM594 486h1v1h-1zM594 494h1v1h-1zM594 503h1v1h-1zM594 511h1v1h-1zM607 226h1v1h-1zM607 267h1v1h-1zM607 307h1v1h-1zM607 348h1v1h-1zM607 389h1v1h-1zM607 429h1v1h-1zM607 470h1v1h-1zM620 226h1v1h-1zM620 267h1v1h-1zM620 307h1v1h-1zM620 348h1v1h-1zM620 389h1v1h-1zM620 429h1v1h-1zM620 470h1v1h-1zM632 226h1v1h-1zM632 267h1v1h-1zM632 307h1v1h-1zM632 348h1v1h-1zM632 389h1v1h-1zM632 429h1v1h-1zM632 470h1v1h-1zM645 226h1v1h-1zM645 267h1v1h-1zM645 307h1v1h-1zM645 348h1v1h-1zM645 389h1v1h-1zM645 429h1v1h-1zM645 470h1v1h-1zM658 185h1v1h-1zM658 193h1v1h-1zM658 201h1v1h-1zM658 209h1v1h-1zM658 218h1v1h-1zM658 226h1v1h-1zM658 234h1v1h-1zM658 242h1v1h-1zM658 250h1v1h-1zM658 258h1v1h-1zM658 266h1v1h-1zM658 267h1v1h-1zM658 275h1v1h-1zM658 283h1v1h-1zM658 291h1v1h-1zM658 299h1v1h-1zM658 307h1v1h-1zM658 315h1v1h-1zM658 323h1v1h-1zM658 332h1v1h-1zM658 340h1v1h-1zM658 348h1v1h-1zM658 356h1v1h-1zM658 364h1v1h-1zM658 372h1v1h-1zM658 380h1v1h-1zM658 389h1v1h-1zM658 397h1v1h-1zM658 405h1v1h-1zM658 413h1v1h-1zM658 421h1v1h-1zM658 429h1v1h-1zM658 437h1v1h-1zM658 446h1v1h-1zM658 454h1v1h-1zM658 462h1v1h-1zM658 470h1v1h-1zM658 478h1v1h-1zM658 486h1v1h-1zM658 494h1v1h-1zM658 503h1v1h-1zM658 511h1v1h-1zM671 226h1v1h-1zM671 267h1v1h-1zM671 307h1v1h-1zM671 348h1v1h-1zM671 389h1v1h-1zM671 429h1v1h-1zM671 470h1v1h-1zM683 226h1v1h-1zM683 267h1v1h-1zM683 307h1v1h-1zM683 348h1v1h-1zM683 389h1v1h-1zM683 429h1v1h-1zM683 470h1v1h-1zM696 226h1v1h-1zM696 267h1v1h-1zM696 307h1v1h-1zM696 348h1v1h-1zM696 389h1v1h-1zM696 429h1v1h-1zM696 470h1v1h-1zM709 226h1v1h-1zM709 267h1v1h-1zM709 307h1v1h-1zM709 348h1v1h-1zM709 389h1v1h-1zM709 429h1v1h-1zM709 470h1v1h-1zM722 226h1v1h-1zM722 267h1v1h-1zM722 307h1v1h-1zM722 348h1v1h-1zM722 389h1v1h-1zM722 429h1v1h-1zM722 470h1v1h-1z" fill="#e6e6e6"/><polyline points="84.2,224.2 84.7,226.9 85.2,230.1 85.7,233.8 86.2,237.9 86.7,242.4 87.2,247.2 87.7,252.4 88.2,257.7 88.7,263.1 89.2,268.6 89.7,274.2 90.2,279.6 90.7,284.9 91.2,290.1 91.7,294.9 92.2,299.4 92.7,303.5 93.2,307.2 93.7,310.4 94.2,313.1 94.7,315.2 95.2,316.8 95.7,317.7 96.2,318.0 96.7,317.4 97.2,315.8 97.7,313.1 98.2,309.4 98.7,304.8 99.2,299.4 99.7,293.3 100.2,286.7 100.7,279.6 101.2,272.3 101.7,265.0 102.2,257.7 102.7,250.6 103.2,244.0 103.7,237.9 104.2,232.5 104.7,227.9 105.2,224.2 105.7,221.5 106.2,219.9 106.7,219.3 107.2,219.6 107.7,220.5 108.2,222.1 108.7,224.2 109.2,226.9 109.7,230.1 110.2,233.8 110.7,237.9 111.2,242.4 111.7,247.2 112.2,252.4 112.7,257.7 113.2,263.1 113.7,268.6 114.2,274.2 114.7,279.6 115.2,284.9 115.7,290.1 116.2,294.9 116.7,299.4 117.2,303.5 117.7,307.2 118.2,310.4 118.7,313.1 119.2,315.2 119.7,316.8 120.2,317.7 120.7,318.0 121.2,317.4 121.8,315.6 122.3,312.6 122.8,308.6 123.3,303.5 123.8,297.7 124.4,291.1 124.9,283.9 125.4,276.4 125.9,268.7 126.5,260.9 127.0,253.4 127.5,246.2 128.0,239.6 128.6,233.8 129.1,228.7 129.6,224.7 130.1,221.7 130.7,219.9 131.2,219.3 131.7,219.6 132.2,220.6 132.7,222.3 133.2,224.5 133.8,227.4 134.3,230.8 134.8,234.8 135.3,239.2 135.8,244.0 136.3,249.1 136.8,254.5 137.3,260.1 137.8,265.8 138.4,271.5 138.9,277.2 139.4,282.8 139.9,288.2 140.4,293.3 140.9,298.1 141.4,302.5 141.9,306.5 142.4,309.9 143.0,312.8 143.5,315.0 144.0,316.7 144.5,317.7 145.0,318.0 145.5,317.4 146.0,315.8 146.5,313.1 147.0,309.4 147.5,304.8 148.1,299.4 148.6,293.3 149.1,286.7 149.6,279.6 150.1,272.3 150.6,265.0 151.1,257.7 151.6,250.6 152.1,244.0 152.6,237.9 153.2,232.5 153.7,227.9 154.2,224.2 154.7,221.5 155.2,219.9 155.7,219.3 156.2,219.6 156.7,220.6 157.2,222.3 157.7,224.5 158.2,227.4 158.7,230.8 159.2,234.8 159.7,239.2 160.2,244.0 160.7,249.1 161.2,254.5 161.7,260.1 162.2,265.8 162.8,271.5 163.3,277.2 163.8,282.8 164.3,288.2 164.8,293.3 165.3,298.1 165.8,302.5 166.3,306.5 166.8,309.9 167.3,312.8 167.8,315.0 168.3,316.7 168.8,317.7 169.3,318.0 169.8,317.4 170.3,315.8 170.8,313.1 171.3,309.4 171.8,304.8 172.3,299.4 172.8,293.3 173.3,286.7 173.8,279.6 174.3,272.3 174.9,265.0 175.4,257.7 175.9,250.6 176.4,244.0 176.9,237.9 177.4,232.5 177.9,227.9 178.4,224.2 178.9,221.5 179.4,219.9 179.9,219.3 180.4,219.7 180.9,220.7 181.4,222.5 181.9,225.0 182.5,228.0 183.0,231.7 183.5,235.9 184.0,240.6 184.5,245.7 185.0,251.2 185.5,256.8 186.0,262.7 186.6,268.6 187.1,274.6 187.6,280.5 188.1,286.1 188.6,291.6 189.1,296.7 189.6,301.4 190.1,305.6 190.6,309.3 191.2,312.3 191.7,314.8 192.2,316.6 192.7,317.6 193.2,318.0 193.7,317.4 194.2,315.6 194.7,312.6 195.2,308.6 195.7,303.5 196.2,297.7 196.7,291.1 197.2,283.9 197.7,276.4 198.2,268.7 198.8,260.9 199.3,253.4 199.8,246.2 200.3,239.6 200.8,233.8 201.3,228.7 201.8,224.7 202.3,221.7 202.8,219.9 203.3,219.3 203.8,219.7 204.3,220.7 204.8,222.5 205.3,225.0 205.9,228.0 206.4,231.7 206.9,235.9 207.4,240.6 207.9,245.7 208.4,251.2 208.9,256.8 209.4,262.7 209.9,268.6 210.5,274.6 211.0,280.5 211.5,286.1 212.0,291.6 212.5,296.7 213.0,301.4 213.5,305.6 214.0,309.3 214.6,312.3 215.1,314.8 215.6,316.6 216.1,317.6 216.6,318.0 217.1,317.4 217.6,315.6 218.1,312.7 218.6,308.6 219.1,303.6 219.6,297.8 220.1,291.2 220.6,284.1 221.1,276.7 221.6,269.0 222.2,261.3 222.7,253.9 223.2,246.8 223.7,240.2 224.2,234.4 224.7,229.4 225.2,225.3 225.7,222.4 226.2,220.6 226.7,220.0 227.2,220.3 227.7,221.3 228.2,223.0 228.7,225.2 229.2,228.1 229.7,231.5 230.2,235.4 230.7,239.7 231.2,244.5 231.7,249.6 232.2,254.9 232.7,260.5 233.2,266.2 233.8,271.8 234.3,277.5 234.8,283.1 235.3,288.4 235.8,293.5 236.3,298.3 236.8,302.6 237.3,306.5 237.8,309.9 238.3,312.8 238.8,315.0 239.3,316.7 239.8,317.7 240.3,318.0 240.8,317.4 241.3,315.6 241.8,312.7 242.3,308.7 242.8,303.8 243.3,298.0 243.8,291.5 244.3,284.5 244.8,277.1 245.3,269.5 245.8,261.9 246.3,254.5 246.8,247.5 247.3,241.0 247.8,235.2 248.3,230.3 248.8,226.3 249.3,223.4 249.8,221.6 250.3,221.0 250.8,221.4 251.3,222.4 251.8,224.2 252.3,226.6 252.9,229.6 253.4,233.2 253.9,237.3 254.4,241.9 254.9,247.0 255.4,252.3 255.9,257.9 256.4,263.7 257.0,269.5 257.5,275.3 258.0,281.1 258.5,286.7 259.0,292.0 259.5,297.1 260.0,301.7 260.5,305.8 261.0,309.4 261.6,312.4 262.1,314.8 262.6,316.6 263.1,317.6 263.6,318.0 264.1,317.3 264.6,315.4 265.1,312.2 265.6,307.8 266.2,302.3 266.7,296.0 267.2,289.0 267.7,281.4 268.2,273.5 268.7,265.5 269.2,257.6 269.7,250.0 270.2,243.0 270.7,236.7 271.3,231.2 271.8,226.8 272.3,223.6 272.8,221.7 273.3,221.0 273.8,221.3 274.3,222.4 274.8,224.1 275.3,226.4 275.8,229.4 276.3,232.9 276.8,237.0 277.3,241.5 277.8,246.4 278.3,251.7 278.8,257.1 279.3,262.8 279.9,268.5 280.4,274.2 280.9,279.9 281.4,285.3 281.9,290.6 282.4,295.5 282.9,300.0 283.4,304.1 283.9,307.6 284.4,310.6 284.9,312.9 285.4,314.6 285.9,315.7 286.4,316.0 286.9,315.4 287.4,313.8 287.9,311.0 288.4,307.3 288.9,302.7 289.4,297.2 289.9,291.2 290.4,284.6 290.9,277.6 291.4,270.5 291.9,263.4 292.4,256.4 292.9,249.8 293.4,243.8 293.9,238.3 294.4,233.7 294.9,230.0 295.4,227.2 295.9,225.6 296.4,225.0 296.9,225.3 297.4,226.3 297.9,227.8 298.4,230.0 298.9,232.7 299.4,235.9 299.9,239.7 300.4,243.8 300.9,248.3 301.4,253.1 301.9,258.1 302.4,263.3 302.9,268.5 303.5,273.7 304.0,278.9 304.5,283.9 305.0,288.7 305.5,293.2 306.0,297.3 306.5,301.1 307.0,304.3 307.5,307.0 308.0,309.2 308.5,310.7 309.0,311.7 309.5,312.0 310.0,311.5 310.5,309.9 311.0,307.3 311.5,303.8 312.0,299.5 312.5,294.4 313.0,288.7 313.5,282.5 314.0,275.9 314.6,269.2 315.1,262.6 315.6,256.0 316.1,249.8 316.6,244.1 317.1,239.0 317.6,234.7 318.1,231.2 318.6,228.6 319.1,227.0 319.6,226.5 320.1,226.8 320.6,227.8 321.1,229.5 321.6,231.7 322.2,234.6 322.7,238.0 323.2,241.8 323.7,246.1 324.2,250.8 324.7,255.7 325.2,260.8 325.7,266.1 326.3,271.4 326.8,276.7 327.3,281.8 327.8,286.7 328.3,291.4 328.8,295.7 329.3,299.5 329.8,302.9 330.4,305.8 330.9,308.0 331.4,309.7 331.9,310.7 332.4,311.0 332.9,310.5 333.4,308.9 333.9,306.4 334.4,302.9 334.9,298.6 335.4,293.6 335.9,287.9 336.4,281.8 336.9,275.4 337.4,268.8 338.0,262.1 338.5,255.7 339.0,249.6 339.5,243.9 340.0,238.9 340.5,234.6 341.0,231.1 341.5,228.6 342.0,227.0 342.5,226.5 343.0,226.8 343.5,227.7 344.0,229.2 344.5,231.3 345.0,233.9 345.5,237.1 346.0,240.6 346.5,244.6 347.0,249.0 347.5,253.6 348.0,258.4 348.5,263.4 349.0,268.5 349.5,273.6 350.0,278.6 350.5,283.4 351.0,288.0 351.5,292.4 352.0,296.4 352.5,299.9 353.0,303.1 353.5,305.7 354.0,307.8 354.5,309.3 355.0,310.2 355.5,310.5 356.0,309.9 356.5,308.2 357.0,305.3 357.6,301.4 358.1,296.6 358.6,291.0 359.1,284.8 359.6,278.1 360.1,271.1 360.7,263.9 361.2,256.9 361.7,250.2 362.2,244.0 362.7,238.4 363.2,233.6 363.8,229.7 364.3,226.8 364.8,225.1 365.3,224.5 365.8,224.8 366.3,225.8 366.8,227.3 367.4,229.5 367.9,232.2 368.4,235.4 368.9,239.2 369.4,243.3 369.9,247.8 370.5,252.6 371.0,257.6 371.5,262.8 372.0,268.0 372.5,273.2 373.0,278.4 373.5,283.4 374.1,288.2 374.6,292.7 375.1,296.8 375.6,300.6 376.1,303.8 376.6,306.5 377.2,308.7 377.7,310.2 378.2,311.2 378.7,311.5 379.2,310.9 379.7,309.1 380.2,306.2 380.8,302.2 381.3,297.3 381.8,291.6 382.3,285.2 382.8,278.3 383.3,271.1 383.9,263.9 384.4,256.7 384.9,249.8 385.4,243.4 385.9,237.7 386.4,232.8 387.0,228.8 387.5,225.9 388.0,224.1 388.5,223.5 389.0,223.8 389.5,224.8 390.0,226.4 390.5,228.5 391.0,231.3 391.5,234.6 392.0,238.3 392.5,242.5 393.0,247.1 393.5,251.9 394.0,257.0 394.5,262.2 395.1,267.5 395.6,272.8 396.1,278.0 396.6,283.1 397.1,287.9 397.6,292.5 398.1,296.7 398.6,300.4 399.1,303.7 399.6,306.5 400.1,308.6 400.6,310.2 401.1,311.2 401.6,311.5 402.1,310.9 402.6,309.2 403.1,306.5 403.6,302.7 404.1,298.0 404.6,292.5 405.1,286.4 405.6,279.7 406.1,272.7 406.6,265.5 407.1,258.3 407.6,251.3 408.1,244.6 408.6,238.5 409.1,233.0 409.6,228.3 410.1,224.5 410.6,221.8 411.1,220.1 411.6,219.5 412.1,219.9 412.6,221.0 413.1,222.9 413.7,225.5 414.2,228.7 414.7,232.6 415.2,237.0 415.7,241.9 416.2,247.2 416.8,252.8 417.3,258.7 417.8,264.7 418.3,270.8 418.8,276.8 419.3,282.7 419.9,288.3 420.4,293.6 420.9,298.5 421.4,302.9 421.9,306.8 422.4,310.0 423.0,312.6 423.5,314.5 424.0,315.6 424.5,316.0 425.0,315.4 425.5,313.7 426.0,310.8 426.6,307.0 427.1,302.1 427.6,296.5 428.1,290.1 428.6,283.3 429.1,276.1 429.6,268.7 430.2,261.2 430.7,254.0 431.2,247.2 431.7,240.8 432.2,235.2 432.7,230.3 433.3,226.5 433.8,223.6 434.3,221.9 434.8,221.3 435.3,221.7 435.8,222.8 436.3,224.6 436.8,227.1 437.4,230.2 437.9,234.0 438.4,238.3 438.9,243.0 439.4,248.2 439.9,253.7 440.4,259.4 440.9,265.2 441.5,271.1 442.0,276.9 442.5,282.6 443.0,288.1 443.5,293.3 444.0,298.0 444.5,302.3 445.0,306.1 445.6,309.2 446.1,311.7 446.6,313.5 447.1,314.6 447.6,315.0 448.1,314.4 448.6,312.5 449.2,309.5 449.7,305.3 450.2,300.2 450.7,294.2 451.2,287.5 451.8,280.3 452.3,272.8 452.8,265.2 453.3,257.7 453.9,250.5 454.4,243.8 454.9,237.8 455.4,232.7 455.9,228.5 456.5,225.5 457.0,223.6 457.5,223.0 458.0,223.3 458.5,224.2 459.0,225.8 459.5,227.9 460.0,230.6 460.5,233.8 461.1,237.4 461.6,241.5 462.1,246.0 462.6,250.8 463.1,255.8 463.6,261.0 464.1,266.3 464.6,271.7 465.1,277.0 465.6,282.2 466.1,287.2 466.6,292.0 467.1,296.5 467.6,300.6 468.2,304.2 468.7,307.4 469.2,310.1 469.7,312.2 470.2,313.8 470.7,314.7 471.2,315.0 471.7,314.4 472.2,312.8 472.7,310.1 473.2,306.4 473.7,301.8 474.2,296.4 474.7,290.4 475.2,283.8 475.7,277.0 476.2,269.9 476.7,262.8 477.2,256.0 477.7,249.4 478.2,243.4 478.7,238.0 479.2,233.4 479.7,229.7 480.2,227.0 480.7,225.4 481.2,224.8 481.7,225.2 482.2,226.3 482.7,228.2 483.2,230.8 483.8,234.1 484.3,238.1 484.8,242.6 485.3,247.7 485.8,253.3 486.3,259.2 486.8,265.6 487.3,272.1 487.8,278.8 488.4,285.6 488.9,292.5 489.4,299.2 489.9,305.7 490.4,312.1 490.9,318.0 491.4,323.6 491.9,328.7 492.4,333.2 492.9,337.2 493.5,340.5 494.0,343.1 494.5,345.0 495.0,346.1 495.5,346.5 496.6,336.0 497.8,321.8 500.1,304.7 502.6,290.4 505.8,279.0 509.2,272.7 513.5,269.6 517.7,268.5 524.9,267.6 532.0,266.8 537.7,264.2 542.0,257.6 544.8,244.8 546.8,227.7 548.5,210.6 549.9,199.2 551.1,195.8 551.1,195.8 551.6,196.1 552.1,197.1 552.6,198.7 553.2,200.9 553.7,203.7 554.2,207.1 554.7,211.0 555.2,215.3 555.7,220.1 556.2,225.2 556.8,230.7 557.3,236.3 557.8,242.2 558.3,248.2 558.8,254.1 559.3,260.1 559.8,266.0 560.3,271.6 560.9,277.1 561.4,282.2 561.9,287.0 562.4,291.3 562.9,295.2 563.4,298.6 563.9,301.4 564.5,303.6 565.0,305.2 565.5,306.2 566.0,306.5 566.5,306.0 567.0,304.3 567.6,301.7 568.1,298.0 568.6,293.6 569.1,288.3 569.6,282.5 570.2,276.2 570.7,269.7 571.2,263.1 571.7,256.6 572.3,250.3 572.8,244.5 573.3,239.2 573.8,234.8 574.3,231.1 574.9,228.5 575.4,226.8 575.9,226.3 576.4,226.6 576.9,227.4 577.4,228.7 577.9,230.6 578.4,232.9 578.9,235.7 579.4,239.0 579.9,242.6 580.4,246.5 580.9,250.7 581.4,255.1 581.9,259.6 582.4,264.3 582.9,269.0 583.4,273.7 583.9,278.2 584.4,282.6 584.9,286.8 585.4,290.7 585.9,294.3 586.4,297.6 586.9,300.4 587.4,302.7 587.9,304.6 588.4,305.9 588.9,306.7 589.4,307.0 589.9,306.6 590.4,305.5 590.9,303.6 591.4,301.1 591.9,297.9 592.4,294.1 592.9,289.9 593.4,285.1 593.9,280.1 594.4,274.7 594.9,269.3 595.5,263.7 596.0,258.3 596.5,252.9 597.0,247.9 597.5,243.1 598.0,238.9 598.5,235.1 599.0,231.9 599.5,229.4 600.0,227.5 600.5,226.4 601.0,226.0 601.5,226.3 602.0,227.1 602.5,228.5 603.0,230.4 603.5,232.7 604.0,235.6 604.5,238.9 605.0,242.5 605.5,246.5 606.0,250.8 606.5,255.2 607.0,259.9 607.5,264.6 608.0,269.4 608.5,274.1 609.0,278.8 609.5,283.2 610.0,287.5 610.5,291.5 611.0,295.1 611.5,298.4 612.0,301.3 612.5,303.6 613.0,305.5 613.5,306.9 614.0,307.7 614.5,308.0 615.0,307.5 615.5,306.2 616.0,303.9 616.5,300.8 617.0,297.0 617.6,292.5 618.1,287.4 618.6,281.8 619.1,275.9 619.6,269.8 620.1,263.7 620.6,257.6 621.1,251.7 621.6,246.1 622.1,241.0 622.7,236.5 623.2,232.7 623.7,229.6 624.2,227.3 624.7,226.0 625.2,225.5 625.7,225.8 626.2,226.6 626.7,228.0 627.3,229.9 627.8,232.3 628.3,235.2 628.8,238.5 629.3,242.2 629.8,246.2 630.3,250.6 630.9,255.1 631.4,259.8 631.9,264.6 632.4,269.4 632.9,274.2 633.4,278.9 634.0,283.4 634.5,287.8 635.0,291.8 635.5,295.5 636.0,298.8 636.5,301.7 637.0,304.1 637.6,306.0 638.1,307.4 638.6,308.2 639.1,308.5 639.6,308.0 640.1,306.7 640.6,304.4 641.1,301.3 641.6,297.4 642.1,292.8 642.6,287.7 643.1,282.1 643.6,276.2 644.1,270.0 644.7,263.8 645.2,257.6 645.7,251.7 646.2,246.1 646.7,241.0 647.2,236.4 647.7,232.5 648.2,229.4 648.7,227.1 649.2,225.8 649.7,225.3 650.2,225.6 650.7,226.3 651.2,227.6 651.7,229.4 652.2,231.7 652.7,234.4 653.2,237.5 653.7,241.0 654.2,244.8 654.7,248.9 655.2,253.2 655.7,257.6 656.2,262.2 656.8,266.9 657.3,271.6 657.8,276.2 658.3,280.6 658.8,284.9 659.3,289.0 659.8,292.8 660.3,296.3 660.8,299.4 661.3,302.1 661.8,304.4 662.3,306.2 662.8,307.5 663.3,308.2 663.8,308.5 664.3,308.0 664.8,306.5 665.3,304.0 665.8,300.6 666.3,296.3 666.8,291.4 667.3,285.8 667.8,279.8 668.3,273.4 668.8,266.9 669.3,260.4 669.8,254.0 670.3,248.0 670.8,242.4 671.3,237.5 671.8,233.2 672.3,229.8 672.8,227.3 673.3,225.8 673.8,225.3 674.3,225.5 674.8,226.3 675.3,227.5 675.8,229.1 676.3,231.3 676.8,233.8 677.3,236.7 677.8,240.0 678.3,243.6 678.8,247.4 679.3,251.5 679.8,255.8 680.3,260.2 680.8,264.6 681.3,269.2 681.8,273.6 682.3,278.0 682.8,282.3 683.3,286.4 683.8,290.2 684.3,293.8 684.8,297.1 685.3,300.0 685.8,302.5 686.3,304.7 686.8,306.3 687.3,307.5 687.8,308.3 688.3,308.5 688.8,308.0 689.3,306.7 689.8,304.4 690.3,301.3 690.8,297.4 691.4,292.8 691.9,287.7 692.4,282.1 692.9,276.2 693.4,270.0 693.9,263.8 694.4,257.6 694.9,251.7 695.4,246.1 695.9,241.0 696.5,236.4 697.0,232.5 697.5,229.4 698.0,227.1 698.5,225.8 699.0,225.3 699.5,225.6 700.0,226.3 700.5,227.6 701.0,229.4 701.5,231.7 702.0,234.4 702.5,237.5 703.0,241.0 703.5,244.8 704.0,248.9 704.5,253.2 705.0,257.6 705.5,262.2 706.0,266.9 706.5,271.6 707.0,276.2 707.5,280.6 708.0,284.9 708.5,289.0 709.0,292.8 709.5,296.3 710.0,299.4 710.5,302.1 711.0,304.4 711.5,306.2 712.0,307.5 712.5,308.2 713.0,308.5 713.5,308.0 714.0,306.7 714.5,304.4 715.0,301.3 715.5,297.4 716.0,292.9 716.5,287.8 717.0,282.2 717.5,276.2 718.0,270.1 718.5,263.9 719.0,257.8 719.5,251.8 720.0,246.2 720.5,241.1 721.0,236.6 721.5,232.7 722.0,229.6 722.5,227.3 723.0,226.0" fill="none" stroke="#ff0000" stroke-width="1.15" shape-rendering="crispEdges"/><polyline points="84.0,368.0 86.0,368.6 88.0,367.2 90.0,368.0 92.0,368.0 94.0,368.6 96.0,368.0 98.0,368.6 100.0,368.0 102.0,368.6 104.0,368.0 106.0,368.0 108.0,368.0 110.0,367.2 112.0,368.0 114.0,368.0 116.0,368.0 118.0,367.2 120.0,367.2 122.0,368.0 124.0,368.0 126.0,368.0 128.0,368.0 130.0,368.0 132.0,367.2 134.0,368.0 136.0,368.0 138.0,368.0 140.0,368.0 142.0,368.6 144.0,368.0 146.0,368.0 148.0,368.0 150.0,368.0 152.0,368.0 154.0,368.6 156.0,368.0 158.0,368.0 160.0,368.0 162.0,368.6 164.0,368.0 166.0,368.0 168.0,368.0 170.0,368.0 172.0,368.0 174.0,368.0 176.0,368.0 178.0,368.0 180.0,368.0 182.0,368.0 184.0,368.0 186.0,368.0 188.0,367.2 190.0,368.0 192.0,368.6 194.0,368.0 196.0,367.2 198.0,368.6 200.0,368.0 202.0,368.6 204.0,368.0 206.0,368.0 208.0,368.0 210.0,368.0 212.0,368.6 214.0,368.0 216.0,368.0 218.0,367.2 220.0,368.6 222.0,368.6 224.0,368.0 226.0,368.0 228.0,368.6 230.0,368.0 232.0,368.0 234.0,368.0 236.0,368.0 238.0,368.0 240.0,368.0 242.0,368.0 244.0,368.0 246.0,368.0 248.0,368.0 250.0,368.0 252.0,368.0 254.0,368.0 256.0,368.0 258.0,368.0 260.0,368.0 262.0,368.0 264.0,368.6 266.0,368.6 268.0,368.0 270.0,368.0 272.0,368.6 274.0,368.0 276.0,367.2 278.0,368.0 280.0,367.2 282.0,368.0 283.5,368.0" fill="none" stroke="#ffff00" stroke-width="1" shape-rendering="crispEdges"/><polyline points="283.5,468.5 285.0,468.5 287.0,468.5 289.0,468.5 291.0,468.5 293.0,468.5 295.0,468.5 297.0,468.5 299.0,468.5 301.0,468.5 303.0,468.5 305.0,468.5 307.0,468.5 309.0,468.5 311.0,468.5 313.0,468.5 315.0,468.5 317.0,468.5 319.0,468.5 321.0,468.5 323.0,468.5 325.0,468.5 327.0,468.5 329.0,468.5 331.0,468.5 333.0,468.5 335.0,468.5 337.0,468.5 339.0,468.5 341.0,468.5 343.0,468.5 345.0,468.5 347.0,467.7 349.0,468.5 351.0,468.5 353.0,468.5 355.0,468.5 357.0,468.5 359.0,468.5 361.0,468.5 363.0,468.5 365.0,468.5 367.0,468.5 369.0,468.5 371.0,468.5 373.0,468.5 375.0,468.5 377.0,468.5 379.0,467.7 381.0,468.5 383.0,468.5 385.0,468.5 387.0,468.5 389.0,468.5 391.0,468.5 393.0,468.5 395.0,468.5 397.0,468.5 399.0,468.5 401.0,468.5 403.0,468.5 405.0,468.5 407.0,468.5 409.0,468.5 411.0,468.5 413.0,468.5 415.5,468.5 415.8,440.0 416.0,400.0 416.5,369.0 417.5,366.3 419.0,368.0 421.0,368.0 423.0,368.7 425.0,368.0 427.0,368.0 429.0,368.0 431.0,368.0 433.0,368.0 435.0,368.7 437.0,368.0 439.0,368.0 441.0,368.0 443.0,368.0 445.0,368.0 447.0,368.0 449.0,368.0 451.0,368.0 453.0,368.0 455.0,367.2 457.0,368.0 459.0,368.0 461.0,368.0 463.0,368.0 465.0,368.0 467.0,368.0 469.0,368.0 471.0,368.0 473.0,368.0 475.0,367.2 477.0,368.0 479.0,368.0 481.0,368.0 483.0,368.0 485.0,368.0 487.0,368.7 489.0,368.0 491.0,368.0 493.0,368.0 495.0,368.0 497.0,368.7 499.0,368.0 501.0,368.0 503.0,368.0 505.0,368.0 507.0,368.0 509.0,368.0 511.0,368.0 513.0,368.0 515.0,368.0 517.0,368.0 519.0,368.0 521.0,368.0 523.0,367.2 525.0,368.0 527.0,368.0 529.0,368.7 531.0,368.0 533.0,367.2 535.0,368.0 537.0,367.2 539.0,367.2 541.0,368.0 543.0,367.2 545.0,368.0 547.0,368.0 549.0,368.0 551.0,368.7 553.0,367.2 555.0,368.0 557.0,368.0 559.0,368.7 561.0,368.0 563.0,368.0 565.0,368.0 567.0,368.0 569.0,368.0 571.0,368.0 573.0,368.0 575.0,368.0 577.0,368.0 579.0,368.0 581.0,367.2 583.0,368.0 585.0,368.0 587.0,368.7 589.0,368.0 591.0,368.0 593.0,368.0 595.0,368.0 597.0,368.0 599.0,367.2 601.0,368.0 603.0,368.0 605.0,368.0 607.0,368.0 609.0,368.0 611.0,368.7 613.0,368.0 615.0,368.0 617.0,368.0 619.0,368.0 621.0,368.0 623.0,368.0 625.0,368.0 627.0,368.0 629.0,368.0 631.0,368.0 633.0,368.0 635.0,368.7 637.0,367.2 639.0,368.0 641.0,368.0 643.0,368.0 645.0,368.0 647.0,367.2 649.0,368.0 651.0,368.7 653.0,368.0 655.0,368.0 657.0,368.0 659.0,368.0 661.0,368.0 663.0,368.0 665.0,368.0 667.0,368.0 669.0,368.7 671.0,368.0 673.0,368.0 675.0,368.7 677.0,368.0 679.0,368.0 681.0,368.0 683.0,368.0 685.0,368.0 687.0,367.2 689.0,367.2 691.0,368.0 693.0,368.0 695.0,368.0 697.0,368.0 699.0,368.0 701.0,367.2 703.0,368.0 705.0,368.0 707.0,368.0 709.0,367.2 711.0,368.0 713.0,368.0 715.0,368.0 717.0,368.0 719.0,368.7 721.0,367.2 723.0,368.0" fill="none" stroke="#ffff00" stroke-width="1" shape-rendering="crispEdges"/><rect x="283" y="185" width="1.4" height="183" fill="#fff"/><rect x="283" y="368" width="1.6" height="100" fill="#0000e0"/><rect x="283" y="468.5" width="1.4" height="43.5" fill="#fff"/><rect x="495" y="185" width="1.3" height="327" fill="#fff"/><rect x="721" y="185" width="2" height="1" fill="#fff"/><rect x="721" y="226" width="2" height="1" fill="#fff"/><rect x="721" y="266" width="2" height="1" fill="#fff"/><rect x="721" y="307" width="2" height="1" fill="#fff"/><rect x="721" y="348" width="2" height="1" fill="#fff"/><rect x="721" y="389" width="2" height="1" fill="#fff"/><rect x="721" y="429" width="2" height="1" fill="#fff"/><rect x="721" y="470" width="2" height="1" fill="#fff"/><rect x="721" y="511" width="2" height="1" fill="#fff"/><path d="M196.4 446.5L270.5 383" stroke="#fff" stroke-width="1" fill="none"/><path d="M277.2 377.5l-9.2 3.2 5 5.8z" stroke="#fff" stroke-width="1" fill="#000"/><path d="M511.5 345.4L612 343.2" stroke="#fff" stroke-width="1" fill="none"/><path d="M503 345.3l8.5-4.2v8.6z" stroke="#fff" stroke-width="1" fill="#000"/></svg><div class="a" style="left:92px;top:448px;width:161px;height:39px;box-sizing:border-box;background:#ffff66;border:1px solid #ffffd8;border-right-color:#a4a478;border-bottom-color:#a4a478;border-radius:3px"></div><span class="t" style="left:96.00px;top:453.49px;font-size:11px;color:#000;letter-spacing:-0.183px;">Falling slope in camshaft signal</span><span class="t" style="left:96.20px;top:466.29px;font-size:11px;color:#000;letter-spacing:0.043px;">10 teeth from reference point</span><div class="a" style="left:168px;top:482px;width:10px;height:6px;background:#f00"></div><div class="a" style="left:612px;top:322px;width:98px;height:39px;box-sizing:border-box;background:#ffff66;border:1px solid #ffffd8;border-right-color:#a4a478;border-bottom-color:#a4a478;border-radius:3px"></div><span class="t" style="left:615.20px;top:327.49px;font-size:11px;color:#000;letter-spacing:-0.059px;">Crankshaft</span><span class="t" style="left:615.00px;top:340.39px;font-size:11px;color:#000;letter-spacing:0.075px;">reference point</span><div class="a" style="left:656px;top:355px;width:10px;height:6px;background:#f00"></div><div class="a" style="left:40.5px;top:177.5px;width:40.5px;height:15px;background:#f00;border-radius:5px"></div><div class="a" style="left:40.5px;top:504.5px;width:40.5px;height:15px;background:#f00;border-radius:5px"></div><span class="t" style="left:50.87px;top:181.19px;font-size:11px;color:#000;letter-spacing:0.021px;">6.000</span><span class="t" style="left:50.87px;top:221.89px;font-size:11px;color:#f00;letter-spacing:0.021px;">3.000</span><span class="t" style="left:50.87px;top:262.59px;font-size:11px;color:#f00;letter-spacing:0.021px;">0.000</span><span class="t" style="left:46.87px;top:303.29px;font-size:11px;color:#f00;letter-spacing:0.073px;">-3.000</span><span class="t" style="left:46.87px;top:343.99px;font-size:11px;color:#f00;letter-spacing:0.073px;">-6.000</span><span class="t" style="left:46.87px;top:384.69px;font-size:11px;color:#f00;letter-spacing:0.073px;">-9.000</span><span class="t" style="left:40.87px;top:425.39px;font-size:11px;color:#f00;letter-spacing:0.046px;">-12.000</span><span class="t" style="left:40.87px;top:466.09px;font-size:11px;color:#f00;letter-spacing:0.046px;">-15.000</span><span class="t" style="left:40.87px;top:506.79px;font-size:11px;color:#000;letter-spacing:0.046px;">-18.000</span><span class="t" style="left:56.20px;top:201.53px;font-size:10px;color:#f00;">V</span><div class="a" style="left:725.5px;top:300.5px;width:40px;height:15px;background:#ff0;border-radius:5px"></div><div class="a" style="left:725.5px;top:504.5px;width:40px;height:15px;background:#ff0;border-radius:5px"></div><span class="t" style="left:729.17px;top:303.29px;font-size:11px;color:#000;letter-spacing:-0.002px;">8.0000</span><span class="t" style="left:729.17px;top:343.99px;font-size:11px;color:#ff0;letter-spacing:-0.002px;">6.0000</span><span class="t" style="left:729.17px;top:384.69px;font-size:11px;color:#ff0;letter-spacing:-0.002px;">4.0000</span><span class="t" style="left:729.17px;top:425.39px;font-size:11px;color:#ff0;letter-spacing:-0.002px;">2.0000</span><span class="t" style="left:729.17px;top:466.09px;font-size:11px;color:#ff0;letter-spacing:-0.002px;">0.0000</span><span class="t" style="left:725.17px;top:506.79px;font-size:11px;color:#000;letter-spacing:0.046px;">-2.0000</span><span class="t" style="left:741.00px;top:282.54px;font-size:10px;color:#ff0;">V</span><span class="t" style="left:66.75px;top:533.89px;font-size:11px;color:#fff;letter-spacing:0.039px;">-1.34 s</span><span class="t" style="left:130.73px;top:533.89px;font-size:11px;color:#fff;letter-spacing:0.039px;">-1.34 s</span><span class="t" style="left:194.71px;top:533.89px;font-size:11px;color:#fff;letter-spacing:0.039px;">-1.33 s</span><span class="t" style="left:258.69px;top:533.89px;font-size:11px;color:#fff;letter-spacing:0.039px;">-1.33 s</span><span class="t" style="left:322.67px;top:533.89px;font-size:11px;color:#fff;letter-spacing:0.039px;">-1.32 s</span><span class="t" style="left:386.65px;top:533.89px;font-size:11px;color:#fff;letter-spacing:0.039px;">-1.32 s</span><span class="t" style="left:450.63px;top:533.89px;font-size:11px;color:#fff;letter-spacing:0.039px;">-1.32 s</span><span class="t" style="left:514.61px;top:533.89px;font-size:11px;color:#fff;letter-spacing:0.039px;">-1.31 s</span><span class="t" style="left:578.59px;top:533.89px;font-size:11px;color:#fff;letter-spacing:0.039px;">-1.31 s</span><span class="t" style="left:642.57px;top:533.89px;font-size:11px;color:#fff;letter-spacing:0.039px;">-1.30 s</span><span class="t" style="left:706.55px;top:533.89px;font-size:11px;color:#fff;letter-spacing:0.039px;">-1.30 s</span><span class="t" style="left:686.60px;top:160.74px;font-size:18.5px;color:#000;font-family:'Liberation Serif',serif;">1</span><svg width="795" height="596" viewBox="0 0 795 596"><path d="M702 164.5l12 12M714 164.5l-12 12" stroke="#a2a5b2" stroke-width="3.4" fill="none"/></svg><div class="a" style="left:21px;top:550px;width:750px;height:20px;background:#f0eeee;border-top:1px solid #a0a0a0;border-bottom:1px solid #fff;box-sizing:border-box;box-shadow:0 1px 0 #fff inset"></div><svg width="795" height="596" viewBox="0 0 795 596"><rect x="767" y="560" width="2" height="2" fill="#fff"/><rect x="767" y="560" width="2" height="1" fill="#b4b4b4"/><rect x="767" y="561" width="1" height="1" fill="#b4b4b4"/><rect x="764" y="563" width="2" height="2" fill="#fff"/><rect x="764" y="563" width="2" height="1" fill="#b4b4b4"/><rect x="764" y="564" width="1" height="1" fill="#b4b4b4"/><rect x="767" y="563" width="2" height="2" fill="#fff"/><rect x="767" y="563" width="2" height="1" fill="#b4b4b4"/><rect x="767" y="564" width="1" height="1" fill="#b4b4b4"/><rect x="761" y="566" width="2" height="2" fill="#fff"/><rect x="761" y="566" width="2" height="1" fill="#b4b4b4"/><rect x="761" y="567" width="1" height="1" fill="#b4b4b4"/><rect x="764" y="566" width="2" height="2" fill="#fff"/><rect x="764" y="566" width="2" height="1" fill="#b4b4b4"/><rect x="764" y="567" width="1" height="1" fill="#b4b4b4"/><rect x="767" y="566" width="2" height="2" fill="#fff"/><rect x="767" y="566" width="2" height="1" fill="#b4b4b4"/><rect x="767" y="567" width="1" height="1" fill="#b4b4b4"/></svg><svg width="795" height="596" viewBox="0 0 795 596" font-family="'Liberation Sans', sans-serif">
<!-- folder open -->
<g>
<path d="M34.5 87.5v-8.2l1-1h3.5l1 1.3h6.5v2" fill="#f4a860" stroke="#b86a18" stroke-width="1"/>
<path d="M34.5 87.5l2.6-6h12.6l-3 6z" fill="#ffe487" stroke="#b86a18" stroke-width="1" stroke-linejoin="round"/>
<path d="M40.6 77.6c1-2.6 4.6-3.6 7.2-1.400" fill="none" stroke="#111" stroke-width="1.5"/>
<path d="M49.8 74.200v4.400h-4.400z" fill="#111"/>
</g>
<!-- floppy -->
<g>
<path d="M57.500 73.500h13l2 2v13h-15z" fill="#7fc0ff" stroke="#1c1c9c" stroke-width="1"/>
<rect x="61" y="73.500" width="8" height="4.300" fill="#0a0a0a"/>
<rect x="66.200" y="74" width="1.700" height="3.200" fill="#fff"/>
<rect x="60.500" y="80.500" width="9" height="7.500" fill="#fff" stroke="#3a3ab8" stroke-width="1"/>
</g>
<!-- mail -->
<g>
<rect x="80.700" y="75.800" width="14.600" height="10.600" rx="0.800" fill="#ffe287" stroke="#c48a48" stroke-width="1.100"/>
<path d="M81.300 76.300h13.400l-6.700 4.600z" fill="#ffb277" stroke="#d08a48" stroke-width="0.700"/>
</g>
<!-- refresh -->
<g fill="#06b40a" stroke="none">
<path d="M106.600 78.400A5.200 5.200 0 0 1 115 76.600" fill="none" stroke="#06b40a" stroke-width="3"/>
<path d="M118.800 72.800v7.200h-7.200z"/>
<path d="M115.600 83.600A5.200 5.200 0 0 1 107.200 85.400" fill="none" stroke="#06b40a" stroke-width="3"/>
<path d="M103.200 89.200v-7.200h7.200z"/>
</g>
<!-- red X -->
<g>
<path d="M128.300 75.500l11.400 11.200M139.700 75.500l-11.400 11.200" stroke="#d42030" stroke-width="4" stroke-linecap="round" fill="none"/>
<path d="M128.300 75.500l11.400 11.200M139.700 75.500l-11.400 11.200" stroke="#ff6a74" stroke-width="2.300" stroke-linecap="round" fill="none"/>
</g>
<!-- printer -->
<g>
<rect x="152.500" y="74.800" width="9" height="5.500" rx="1" fill="#fff" stroke="#777" stroke-width="1"/>
<rect x="152.500" y="82" width="9" height="5.200" rx="1" fill="#fff" stroke="#777" stroke-width="1"/>
<path d="M150.300 79.200h13.600v5.300h-2v-2.300h-9.600v2.300h-2z" fill="#5a5af4" stroke="#3030d0" stroke-width="0.800"/>
</g>
<!-- gear -->
<g><path d="M178.60 75.84 L178.67 73.45 L181.73 73.45 L181.80 75.84 L182.72 76.22 L184.45 74.58 L186.62 76.75 L184.98 78.48 L185.36 79.40 L187.75 79.47 L187.75 82.53 L185.36 82.60 L184.98 83.52 L186.62 85.25 L184.45 87.42 L182.72 85.78 L181.80 86.16 L181.73 88.55 L178.67 88.55 L178.60 86.16 L177.68 85.78 L175.95 87.42 L173.78 85.25 L175.42 83.52 L175.04 82.60 L172.65 82.53 L172.65 79.47 L175.04 79.40 L175.42 78.48 L173.78 76.75 L175.95 74.58 L177.68 76.22Z" fill="#ffe183" stroke="#dfa244" stroke-width="0.9" stroke-linejoin="round"/><circle cx="180.2" cy="81.0" r="2.5" fill="#d8dcee" stroke="#dfa244" stroke-width="0.9"/></g>
<!-- axes + plus -->
<g>
<path d="M205.500 73v15.500h15.500" fill="none" stroke="#000" stroke-width="1"/>
<path d="M214.800 73.800v10.600M209.400 79.100h10.800" stroke="#4646fa" stroke-width="2.400" fill="none"/>
</g>
<!-- Yt -->
<g>
<path d="M228.500 73v15.500h15.500" fill="none" stroke="#000" stroke-width="1"/>
<path d="M230 84.500h2.500v-4h3.500v4h3.500v-4h3.500v4" fill="none" stroke="#3a96d6" stroke-width="1.300"/>
<path d="M229.500 81.500c3 1 4 4 7 3.500s4-3 7-3.700" fill="none" stroke="#14b414" stroke-width="1.200"/>
<text x="236.600" y="78.300" font-size="7" font-weight="bold" fill="#000" textLength="7.600" lengthAdjust="spacingAndGlyphs">Yt</text>
</g>
<!-- XY -->
<g>
<path d="M251.500 73v15.500h15.500" fill="none" stroke="#000" stroke-width="1"/>
<path d="M260.500 77c-4-1-7.500 3-5.800 6.800c1.700 3.800 8.500 3.600 9.900-0.200c1-3-1.200-6-4.100-6.600" fill="none" stroke="#14b414" stroke-width="1.200"/>
<text x="259.800" y="78.300" font-size="7" font-weight="bold" fill="#000" textLength="7.800" lengthAdjust="spacingAndGlyphs">XY</text>
</g>
<!-- FFT -->
<g>
<path d="M274.500 73v15.500h15.500" fill="none" stroke="#000" stroke-width="1"/>
<path d="M275.500 86.500h5.300l0.800-9.500 0.800 9.500h5.600l0.700-2.600 0.600 2.600h1" fill="none" stroke="#14b414" stroke-width="1.100"/>
<text x="278.600" y="78.300" font-size="7" font-weight="bold" fill="#000" textLength="11.600" lengthAdjust="spacingAndGlyphs">FFT</text>
</g>
<!-- lines -->
<g>
<path d="M297 78c3 0.300 5-0.200 6.300-0.800l0.700-3.400 0.600 3c3 0.800 5.500 0.700 8.400 1.300" fill="none" stroke="#3a96d6" stroke-width="1.200"/>
<path d="M297 84.300c5-0.300 6-1.300 9-1.500s4-0.700 7-1.800" fill="none" stroke="#14c014" stroke-width="1.200"/>
<path d="M297 88.500h16" stroke="#000" stroke-width="1.200"/>
</g>
<!-- 123 -->
<g>
<rect x="320.300" y="73.300" width="15" height="15.400" rx="2.500" fill="#3c6c3c"/>
<rect x="320.300" y="75" width="15" height="12" fill="#b6b44a"/>
<text x="321.200" y="85" font-size="10" font-style="italic" font-weight="bold" fill="#000" textLength="13.200" lengthAdjust="spacingAndGlyphs">123</text>
</g>
<!-- C -->
<path d="M355.300 74.200c-5.300-1.400-9.400 2-9.400 6.800s4.100 8.200 9.400 6.800v-3.800c-2.600 0.500-4.600-0.800-4.600-3s2-3.500 4.600-3z" fill="#0d8242"/>
<!-- I2C -->
<g fill="#dcdce2" stroke="#828282" stroke-width="1">
<rect x="366.300" y="77.800" width="2.600" height="10.400" rx="0.600"/>
<path d="M382 81.200v-2.200l-1.200-1.200h-4.200l-1.300 1.200v8l1.300 1.200h4.200l1.200-1.200v-2.200h-2.300v1.100h-2v-5.800h2v1.100z"/>
</g>
<text x="370" y="79.300" font-size="6.500" font-weight="bold" fill="#777">2</text>
<!-- serial -->
<g>
<text x="388.400" y="79.600" font-size="7" font-weight="bold" fill="#1482c4" textLength="15.600" lengthAdjust="spacingAndGlyphs">00110</text>
<path d="M390 82.300h13.200l-1.300 6h-10.600z" fill="#cfe6cf" stroke="#8a8a8a" stroke-width="0.900"/>
<path d="M392.500 84.300h8.500M393.300 86.300h7" stroke="#6a7a6a" stroke-width="0.800" stroke-dasharray="1 1"/>
</g>

<!-- row3: play -->
<path d="M38.200 102.900v14.200l8.600-7.100z" fill="#10e81e" stroke="#10a010" stroke-width="1.200" stroke-linejoin="round"/>
<rect x="61.200" y="102.800" width="2.500" height="14.400" rx="0.800" fill="#14e424" stroke="#12a012" stroke-width="0.900"/>
<path d="M65.500 106.200v7l4.200-3.500z" fill="#14e424" stroke="#12a012" stroke-width="0.900" stroke-linejoin="round"/>
<text x="80.600" y="117.400" font-size="21" fill="#1c86ff" stroke="#1c86ff" stroke-width="0.500" textLength="15" lengthAdjust="spacingAndGlyphs">A</text>
<path d="M83.300 116.500l4.800-12.700l4.900 12.700M85 112.600h6.300" fill="none" stroke="#55d2ff" stroke-width="0.900"/>
<g>
<rect x="103.500" y="104.400" width="6" height="10.800" fill="#0a0a8c" stroke="#0c8c0c" stroke-width="1"/>
<rect x="112.400" y="104.400" width="6" height="10.800" fill="#0a0a8c" stroke="#0c8c0c" stroke-width="1"/>
<path d="M104.600 106l1.900 7.600 1.900-7.600" fill="none" stroke="#22d0ff" stroke-width="1.100"/>
<path d="M113.500 113.600l1.900-7.600 1.900 7.600" fill="none" stroke="#22d0ff" stroke-width="1.100"/>
</g>
<!-- knob -->
<g>
<defs><radialGradient id="kg" cx="0.350" cy="0.300" r="0.800"><stop offset="0" stop-color="#bcbcbc"/><stop offset="0.400" stop-color="#84848a"/><stop offset="1" stop-color="#2c2c44"/></radialGradient></defs>
<circle cx="392" cy="109.300" r="9.800" fill="url(#kg)"/>
<circle cx="388.300" cy="105.600" r="1.300" fill="#d6dcd2"/>
<path d="M391.600 110.400h4.200l0.400 1.400h3.600l0.300 1.200h3.100" fill="none" stroke="#f4f000" stroke-width="1.800"/>
<g fill="#111">
<rect x="383.300" y="118.200" width="1.500" height="1.500"/><rect x="380.300" y="113.800" width="1.500" height="1.500"/><rect x="380.300" y="108" width="1.500" height="1.500"/><rect x="382" y="102.700" width="1.500" height="1.500"/><rect x="386" y="99.300" width="1.500" height="1.500"/><rect x="391.300" y="98" width="1.500" height="1.500"/><rect x="396.600" y="99.300" width="1.500" height="1.500"/><rect x="400.600" y="102.700" width="1.500" height="1.500"/><rect x="402.600" y="107.600" width="1.500" height="1.500"/><rect x="402.600" y="112.800" width="1.500" height="1.500"/><rect x="399.300" y="118" width="1.500" height="1.500"/>
</g>
</g>
<circle cx="41.4" cy="139.2" r="7.300" fill="#b9b9b9" stroke="#9a9a9a" stroke-width="1"/><circle cx="41.4" cy="139.2" r="5.600" fill="#8c8c8c"/><circle cx="41.4" cy="139.2" r="4.800" fill="#f01010"/><circle cx="41.4" cy="139.2" r="2.400" fill="#f4f000"/><circle cx="41.4" cy="139.2" r="0.700" fill="#806000"/><rect x="83.0" y="136" width="14" height="2" fill="#e01818"/><rect x="83.0" y="140" width="4" height="2" fill="#1818e0"/><rect x="88.0" y="140" width="4" height="2" fill="#1818e0"/><rect x="93.0" y="140" width="4" height="2" fill="#1818e0"/><rect x="105.2" y="131.500" width="16" height="15" rx="2" fill="#3f9446" stroke="#1f6a26" stroke-width="1"/><text x="106.4" y="143.300" font-size="11" fill="#000" textLength="13.600" lengthAdjust="spacingAndGlyphs">AR</text><path d="M172.0 137.300h7l-3.500 4z" fill="#000"/><path d="M188.5 136.300l3-3 3 3z" fill="#4a62c8"/><path d="M188.5 143.300l3 3 3-3z" fill="#4a62c8"/><circle cx="221.4" cy="139.2" r="7.300" fill="#b9b9b9" stroke="#9a9a9a" stroke-width="1"/><circle cx="221.4" cy="139.2" r="5.600" fill="#8c8c8c"/><circle cx="221.4" cy="139.2" r="4.800" fill="#f4f400"/><circle cx="221.4" cy="139.2" r="3" fill="none" stroke="#c8c800" stroke-width="0.800"/><circle cx="221.4" cy="139.2" r="0.700" fill="#806000"/><rect x="263.0" y="136" width="14" height="2" fill="#e01818"/><rect x="263.0" y="140" width="4" height="2" fill="#1818e0"/><rect x="268.0" y="140" width="4" height="2" fill="#1818e0"/><rect x="273.0" y="140" width="4" height="2" fill="#1818e0"/><rect x="285.2" y="131.500" width="16" height="15" rx="2" fill="#3f9446" stroke="#1f6a26" stroke-width="1"/><text x="286.4" y="143.300" font-size="11" fill="#000" textLength="13.600" lengthAdjust="spacingAndGlyphs">AR</text><path d="M352.0 137.300h7l-3.500 4z" fill="#000"/><path d="M368.5 136.300l3-3 3 3z" fill="#4a62c8"/><path d="M368.5 143.300l3 3 3-3z" fill="#4a62c8"/><circle cx="401.4" cy="139.2" r="7.300" fill="#b9b9b9" stroke="#9a9a9a" stroke-width="1"/><circle cx="401.4" cy="139.2" r="5.600" fill="#8c8c8c"/><circle cx="401.4" cy="139.2" r="4.800" fill="#30dc10"/><circle cx="401.4" cy="139.2" r="2.400" fill="#f4f000"/><circle cx="401.4" cy="139.2" r="0.700" fill="#806000"/><rect x="443.0" y="136" width="14" height="2" fill="#e01818"/><rect x="443.0" y="140" width="4" height="2" fill="#1818e0"/><rect x="448.0" y="140" width="4" height="2" fill="#1818e0"/><rect x="453.0" y="140" width="4" height="2" fill="#1818e0"/><rect x="465.2" y="131.500" width="16" height="15" rx="2" fill="#3f9446" stroke="#1f6a26" stroke-width="1"/><text x="466.4" y="143.300" font-size="11" fill="#000" textLength="13.600" lengthAdjust="spacingAndGlyphs">AR</text><path d="M532.0 137.300h7l-3.500 4z" fill="#000"/><path d="M548.5 136.300l3-3 3 3z" fill="#4a62c8"/><path d="M548.5 143.300l3 3 3-3z" fill="#4a62c8"/><circle cx="581.4" cy="139.2" r="7.300" fill="#b9b9b9" stroke="#9a9a9a" stroke-width="1"/><circle cx="581.4" cy="139.2" r="5.600" fill="#8c8c8c"/><circle cx="581.4" cy="139.2" r="4.800" fill="#2890e4"/><circle cx="581.4" cy="139.2" r="2.400" fill="#f4f000"/><circle cx="581.4" cy="139.2" r="0.700" fill="#806000"/><rect x="623.0" y="136" width="14" height="2" fill="#e01818"/><rect x="623.0" y="140" width="4" height="2" fill="#1818e0"/><rect x="628.0" y="140" width="4" height="2" fill="#1818e0"/><rect x="633.0" y="140" width="4" height="2" fill="#1818e0"/><rect x="645.2" y="131.500" width="16" height="15" rx="2" fill="#3f9446" stroke="#1f6a26" stroke-width="1"/><text x="646.4" y="143.300" font-size="11" fill="#000" textLength="13.600" lengthAdjust="spacingAndGlyphs">AR</text><path d="M712.0 137.300h7l-3.500 4z" fill="#000"/><path d="M728.5 136.300l3-3 3 3z" fill="#4a62c8"/><path d="M728.5 143.300l3 3 3-3z" fill="#4a62c8"/>

<!-- plot toolbar icons -->
<rect x="92.300" y="162.300" width="15.400" height="15.400" fill="#000"/>
<path d="M95 175h4v-5h5.500v-5" fill="none" stroke="#08f008" stroke-width="1.900"/>
<rect x="94" y="174" width="2" height="2" fill="#fff"/><rect x="98" y="169" width="2" height="2" fill="#fff"/><rect x="103.500" y="164" width="2" height="2" fill="#fff"/>
<rect x="113" y="159" width="1" height="22" fill="#a4a6b8"/><rect x="114" y="159" width="1" height="22" fill="#fff"/>
<rect x="121" y="162.300" width="15.400" height="15.400" fill="#000"/>
<path d="M122 170c1.500-1 2-6 4-6s3 6.500 5 7.500 3-2 5-2.500" fill="none" stroke="#08f008" stroke-width="1.800"/>
<path d="M122 171c1.500 1 2 5 4.500 5s3.500-5 5.500-5.500 2 2.500 3.500 3" fill="none" stroke="#10f0ff" stroke-width="1.800"/>
<rect x="140.500" y="160.500" width="22" height="19" rx="3" fill="#d2d4dc" stroke="#6e6e72" stroke-width="1"/>
<rect x="145" y="162.500" width="15.400" height="15.400" fill="#000"/>
<path d="M146 171l3-1.500 4-4 4 3 3 1.500" fill="none" stroke="#08f008" stroke-width="1.800"/>
<path d="M148.500 164v13M157.500 164v13" stroke="#fff" stroke-width="1"/>
<rect x="167.300" y="162.300" width="15.400" height="15.400" fill="#000"/>
<path d="M168.500 170l6.200-5.300 6.300 3.500" fill="none" stroke="#08f008" stroke-width="1.900"/>
<rect x="174" y="164.500" width="1.800" height="11.500" fill="#fff"/>
<text x="168.800" y="176.300" font-size="5.500" fill="#bbb">0</text>
<rect x="190.300" y="162.300" width="15.400" height="15.400" fill="#000"/>
<rect x="192" y="164" width="2" height="2" fill="#10e010"/><rect x="192" y="168" width="2" height="2" fill="#10e4f0"/>
<text x="195.500" y="166.500" font-size="3.500" fill="#ccc" textLength="8.500" lengthAdjust="spacingAndGlyphs">Ch1</text>
<text x="195.500" y="170.500" font-size="3.500" fill="#ccc" textLength="8.500" lengthAdjust="spacingAndGlyphs">Ch2</text>
<!-- eraser -->
<g transform="translate(221 169.500) rotate(45)">
<path d="M-10.800 -1.800h9v4h-9z" fill="#f59a20" stroke="#c86a08" stroke-width="0.600"/>
<path d="M-10.500 -1.200h8.500v1.200h-8.500z" fill="#ffb648"/>
<rect x="-1.800" y="-2.400" width="5.600" height="5" fill="#8e8e8e" stroke="#5a5a5a" stroke-width="0.600"/>
<rect x="-1.400" y="-1.800" width="4.800" height="1.500" fill="#b8b8b8"/>
<rect x="3.800" y="-2.400" width="2" height="5" fill="#e8501c"/>
<path d="M5.800 -2.600h3.200c1.800 0.600 1.800 4.600 0 5.200h-3.200z" fill="#fff"/>
</g>
<!-- disabled zoom -->
<rect x="236.800" y="162.800" width="14.500" height="14.500" fill="none" stroke="#b4b6c4" stroke-width="1"/>
<rect x="238.500" y="170" width="6" height="6" fill="#b4b6c4"/>
<path d="M244.500 169.500l5-5m-3.500 0h3.500v3.500" fill="none" stroke="#b4b6c4" stroke-width="1.200"/>
<rect x="257" y="159" width="1" height="22" fill="#a4a6b8"/><rect x="258" y="159" width="1" height="22" fill="#fff"/>
<!-- comment -->
<rect x="265.500" y="162.500" width="15" height="8.500" rx="1.500" fill="#ffff5a" stroke="#222" stroke-width="1"/>
<text x="267" y="166" font-size="2.800" fill="#444" textLength="11" lengthAdjust="spacingAndGlyphs">Comment</text>
<text x="267" y="169.300" font-size="2.800" fill="#444">Text</text>
<path d="M270.500 171l5 5.300" stroke="#000" stroke-width="1.200"/><path d="M277.300 178v-4.300l-4.300 4.300z" fill="#000"/>
<rect x="288.500" y="165.800" width="15" height="8.500" rx="1" fill="#ffff5a" stroke="#555" stroke-width="0.800"/>
<path d="M289 163l14.500 14.500M303.500 163l-14.500 14.500" stroke="#ee1c30" stroke-width="2.500" fill="none"/>
<rect x="309" y="159" width="1" height="22" fill="#a4a6b8"/><rect x="310" y="159" width="1" height="22" fill="#fff"/>
<!-- eye disabled -->
<path d="M318.500 170.500c3-4.500 11-4.500 14.500 0c-3.500 4.500-11.500 4.500-14.500 0z" fill="none" stroke="#b0b2c0" stroke-width="1.200"/>
<circle cx="325.800" cy="170.500" r="2.300" fill="#b0b2c0"/>
<path d="M319.500 177.500l13-14M321 164.500l10.500 11.500" stroke="#b8bac8" stroke-width="1.100"/>

</svg>
</body></html>
